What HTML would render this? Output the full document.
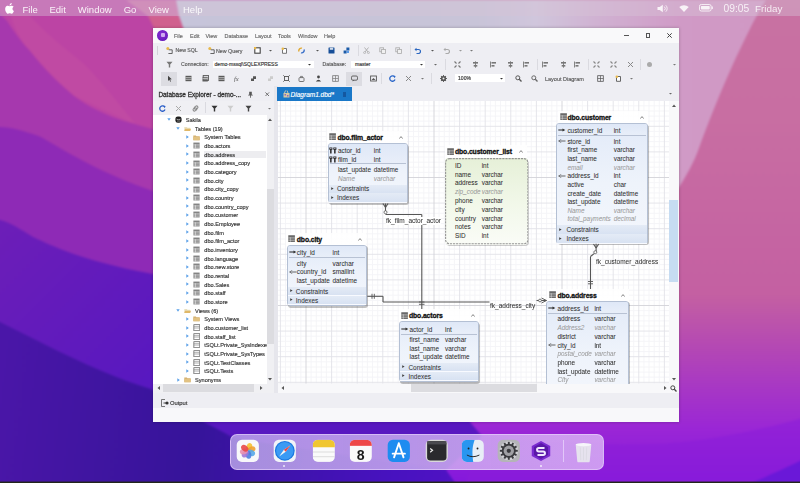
<!DOCTYPE html>
<html><head><meta charset="utf-8"><style>
html,body{margin:0;padding:0;width:800px;height:483px;overflow:hidden;background:#6020b0}
body{position:relative;font-family:"Liberation Sans", sans-serif}
</style></head><body>
<div style="position:absolute;left:0;top:0;width:800px;height:483px;filter:blur(0.42px)"><svg width="820" height="503" viewBox="-10 -10 820 503" style="position:absolute;left:-10px;top:-10px;filter:blur(1px)">
<defs>
<linearGradient id="gR" x1="0" y1="0" x2="0" y2="483" gradientUnits="userSpaceOnUse">
 <stop offset="0" stop-color="#c872a2"/>
 <stop offset="0.25" stop-color="#c86ea2"/>
 <stop offset="0.61" stop-color="#c460a2"/>
 <stop offset="0.72" stop-color="#b448b4"/>
 <stop offset="0.89" stop-color="#9a26d6"/>
 <stop offset="1" stop-color="#8418dc"/>
</linearGradient>
<linearGradient id="gTop" x1="170" y1="0" x2="780" y2="0" gradientUnits="userSpaceOnUse">
 <stop offset="0" stop-color="#c6c4da"/>
 <stop offset="0.5" stop-color="#c8c4d8"/>
 <stop offset="0.6" stop-color="#d0c6dc"/>
 <stop offset="0.7" stop-color="#d0b2d2"/>
 <stop offset="0.84" stop-color="#d09ac6"/>
 <stop offset="1" stop-color="#d098c4"/>
</linearGradient>
<linearGradient id="gP4" x1="0" y1="230" x2="150" y2="380" gradientUnits="userSpaceOnUse">
 <stop offset="0" stop-color="#6c1eb8"/>
 <stop offset="1" stop-color="#5818c0"/>
</linearGradient>
<linearGradient id="gBot" x1="0" y1="380" x2="800" y2="483" gradientUnits="userSpaceOnUse">
 <stop offset="0" stop-color="#4a16a8"/>
 <stop offset="0.25" stop-color="#36149a"/>
 <stop offset="0.5" stop-color="#4812c0"/>
 <stop offset="1" stop-color="#7a18d8"/>
</linearGradient>
</defs>
<rect x="-10" y="-10" width="820" height="503" fill="url(#gR)"/>
<!-- P1 pink top-left -->
<path d="M-10 -10 H400 V493 H-10 Z" fill="#bc44a4"/>
<!-- P2 -->
<path d="M28 14 C42 30 62 46 84 64 C100 80 116 100 136 125 L74 96 C60 84 45 69 30 51 C22 43 15 30 10 14 Z" fill="#c652a2" opacity="0.45"/>
<path d="M-10 4 L7 21 C15 33 22 43 30 51 C37 60 45 69 52 76 C60 84 67 90 74 96 C82 102 90 107 99 111 C107 115 115 118 124 121 C132 123 141 126 153 129 L400 200 V493 H-10 Z" fill="#a638ae"/>
<!-- P3 -->
<path d="M-10 126 L0 127 C10 127 25 131 41 137 C70 154 103 174 153 191 L400 260 V493 H-10 Z" fill="#8e2ab6"/>
<!-- P4 -->
<path d="M-10 218 L0 220 C10 222 20 229 33 237 C66 253 103 265 153 274 L480 380 L470 422 L482 436 L446 470 L462 493 H-10 Z" fill="url(#gP4)"/>
<!-- P5 dark -->
<path d="M-10 317 L0 322 C14 329 28 336 42 343 C84 364 120 380 151 389 C170 400 190 412 204 422 C215 428 225 433 232 437 C300 450 400 462 446 470 L462 493 L-10 493 Z" fill="url(#gBot)"/>
<!-- red sliver + light top region -->
<path d="M126 0 L176 0 L179 16 L148 16 Z" fill="#cc6aa6"/><path d="M148 16 L179 16 L184 30 L155 30 Z" fill="#d0608e"/>
<path d="M176 0 L766 0 C748 28 718 95 699 148 C694 162 687 175 676 192 L190 192 L184 30 L179 16 Z" fill="url(#gTop)"/>
<path d="M482 436 C560 445 650 448 700 440 C740 434 780 425 810 416 L810 493 L462 493 Z" fill="#8a1ed8" opacity="0.55"/>
<path d="M752 483 C770 475 785 468 800 461 L810 456 L810 493 L752 493 Z" fill="#6a18d8"/>

</svg><div style="position:absolute;left:0;top:481px;width:800px;height:2px;background:linear-gradient(rgba(34,38,28,0.45) 50%,#22261c 50%)"></div><div style="position:absolute;left:0;top:0;width:800px;height:16px;background:rgba(215,195,215,0.42)"></div><svg style="position:absolute;left:5px;top:3px" width="9" height="11" viewBox="0 0 17 20"><path fill="#fff" d="M14.1 10.6c0-2.6 2.1-3.8 2.2-3.9-1.2-1.8-3.1-2-3.7-2-1.6-.2-3.1.9-3.9.9-.8 0-2-.9-3.3-.9-1.7 0-3.3 1-4.2 2.5-1.8 3.1-.5 7.7 1.3 10.2.9 1.2 1.9 2.6 3.2 2.6 1.3-.1 1.8-.8 3.3-.8 1.6 0 2 .8 3.3.8 1.4 0 2.3-1.3 3.1-2.5 1-1.4 1.4-2.8 1.4-2.9-.1 0-2.7-1-2.7-4zM11.6 3c.7-.9 1.2-2 1-3.2-1 0-2.3.7-3 1.6-.7.8-1.2 2-1.1 3.1 1.2.1 2.3-.6 3.1-1.5z"/></svg><div style="position:absolute;left:22.5px;top:4.6px;font-size:9.5px;line-height:1;color:rgba(255,255,255,0.9);white-space:nowrap;">File</div><div style="position:absolute;left:49.5px;top:4.6px;font-size:9.5px;line-height:1;color:rgba(255,255,255,0.9);white-space:nowrap;">Edit</div><div style="position:absolute;left:77.8px;top:4.6px;font-size:9.5px;line-height:1;color:rgba(255,255,255,0.9);white-space:nowrap;">Window</div><div style="position:absolute;left:123.7px;top:4.6px;font-size:9.5px;line-height:1;color:rgba(255,255,255,0.9);white-space:nowrap;">Go</div><div style="position:absolute;left:148.5px;top:4.6px;font-size:9.5px;line-height:1;color:rgba(255,255,255,0.9);white-space:nowrap;">View</div><div style="position:absolute;left:183px;top:4.6px;font-size:9.5px;line-height:1;color:rgba(255,255,255,0.9);white-space:nowrap;">Help</div><svg style="position:absolute;left:657px;top:3.5px;opacity:0.85" width="11" height="9" viewBox="0 0 11 9"><path d="M0.5 3h2.2L5.8 0.8v7.4L2.7 6H0.5z" fill="#fff"/><path d="M7.3 2.6a2.6 2.6 0 0 1 0 3.8M8.8 1.3a4.4 4.4 0 0 1 0 6.4" fill="none" stroke="#fff" stroke-width="0.9"/></svg><svg style="position:absolute;left:678.5px;top:3.5px;opacity:0.85" width="10" height="8.5" viewBox="0 0 11 9"><path d="M5.5 8.5L0.3 3.2A7.5 7.5 0 0 1 10.7 3.2Z" fill="#fff"/></svg><svg style="position:absolute;left:698.5px;top:4.2px;opacity:0.85" width="14" height="7.5" viewBox="0 0 15 8"><rect x="0.5" y="0.5" width="12.5" height="7" rx="2" fill="none" stroke="#fff" stroke-width="1"/><rect x="2" y="2" width="9.5" height="4" rx="0.8" fill="#fff"/><rect x="13.6" y="2.6" width="1.2" height="2.8" fill="#fff"/></svg><div style="position:absolute;left:723.5px;top:3.9px;font-size:10.3px;line-height:1;color:rgba(255,255,255,0.82);white-space:nowrap;">09:05</div><div style="position:absolute;left:755px;top:3.9px;font-size:9.9px;line-height:1;color:rgba(255,255,255,0.82);white-space:nowrap;">Friday</div><div style="position:absolute;left:153px;top:28px;width:526px;height:394px;background:#eeeef3;box-shadow:0 0 3px rgba(0,0,0,0.25)"></div><div style="position:absolute;left:153px;top:28px;width:526px;height:14.5px;background:#f9f9fa"></div><div style="position:absolute;left:157.3px;top:29.8px;width:11px;height:11px;border-radius:50%;background:radial-gradient(circle at 45% 40%,#8a30d8,#5a10b0)"></div><div style="position:absolute;left:160.6px;top:32.6px;width:4.6px;height:4.8px;border-radius:1px;background:#d8b8f4;opacity:0.9"></div><div style="position:absolute;left:174px;top:32.61px;font-size:5.5px;line-height:1.15;color:#6a6a6a;white-space:nowrap;-webkit-text-stroke:0.15px #6a6a6a;">File</div><div style="position:absolute;left:190px;top:32.61px;font-size:5.5px;line-height:1.15;color:#6a6a6a;white-space:nowrap;-webkit-text-stroke:0.15px #6a6a6a;">Edit</div><div style="position:absolute;left:205.5px;top:32.61px;font-size:5.5px;line-height:1.15;color:#6a6a6a;white-space:nowrap;-webkit-text-stroke:0.15px #6a6a6a;">View</div><div style="position:absolute;left:224.5px;top:32.61px;font-size:5.5px;line-height:1.15;color:#6a6a6a;white-space:nowrap;-webkit-text-stroke:0.15px #6a6a6a;">Database</div><div style="position:absolute;left:255px;top:32.61px;font-size:5.5px;line-height:1.15;color:#6a6a6a;white-space:nowrap;-webkit-text-stroke:0.15px #6a6a6a;">Layout</div><div style="position:absolute;left:278px;top:32.61px;font-size:5.5px;line-height:1.15;color:#6a6a6a;white-space:nowrap;-webkit-text-stroke:0.15px #6a6a6a;">Tools</div><div style="position:absolute;left:298px;top:32.61px;font-size:5.5px;line-height:1.15;color:#6a6a6a;white-space:nowrap;-webkit-text-stroke:0.15px #6a6a6a;">Window</div><div style="position:absolute;left:324px;top:32.61px;font-size:5.5px;line-height:1.15;color:#6a6a6a;white-space:nowrap;-webkit-text-stroke:0.15px #6a6a6a;">Help</div><div style="position:absolute;left:624px;top:35.3px;width:5px;height:0.8px;background:#555"></div><div style="position:absolute;left:645.5px;top:33px;width:4.5px;height:4.5px;border:1px solid #555;box-sizing:border-box"></div><svg style="position:absolute;left:666.5px;top:32.5px" width="5" height="5" viewBox="0 0 5 5"><path d="M0.3 0.3L4.7 4.7M4.7 0.3L0.3 4.7" stroke="#444" stroke-width="1"/></svg><div style="position:absolute;left:156.8px;top:46px;width:0.8px;height:9px;background:#d2d2d8"></div><svg style="position:absolute;left:166.00px;top:47.00px" width="7" height="7" viewBox="0 0 7 7"><circle cx="1.8" cy="1.6" r="1.5" fill="#e8b84a"/><path d="M2.8 2.8h3.4v3.7H2.4" fill="none" stroke="#555" stroke-width="0.9"/></svg><div style="position:absolute;left:175.5px;top:48.18px;font-size:5.2px;line-height:1.15;color:#5a5a5a;white-space:nowrap;-webkit-text-stroke:0.15px #5a5a5a;">New SQL</div><svg style="position:absolute;left:207.50px;top:47.00px" width="7" height="7" viewBox="0 0 7 7"><circle cx="1.8" cy="1.6" r="1.5" fill="#e8b84a"/><path d="M2.8 2.8h3.4v3.7H2.4" fill="none" stroke="#555" stroke-width="0.9"/></svg><div style="position:absolute;left:216px;top:48.13px;font-size:5.3px;line-height:1.15;color:#5a5a5a;white-space:nowrap;-webkit-text-stroke:0.15px #5a5a5a;">New Query</div><svg style="position:absolute;left:253.50px;top:47.00px" width="7" height="7" viewBox="0 0 7 7"><rect x="0.8" y="0.8" width="5.4" height="5.4" fill="#fff" stroke="#444" stroke-width="1.1"/><rect x="0" y="0" width="2.2" height="2.2" fill="#e8b84a"/></svg><svg style="position:absolute;left:267.00px;top:47.00px" width="7" height="7" viewBox="0 0 7 7"><path d="M2 3L5 3L3.5 4.6Z" fill="#555"/></svg><svg style="position:absolute;left:281.00px;top:47.00px" width="7" height="7" viewBox="0 0 7 7"><path d="M1.5 1.5H5.5V6.3H1.5Z" fill="#fff" stroke="#666" stroke-width="0.9"/><circle cx="1.8" cy="1.8" r="1.3" fill="#e8b84a"/></svg><svg style="position:absolute;left:298.00px;top:47.00px" width="7" height="7" viewBox="0 0 7 7"><path d="M1 4.5A2.5 2.5 0 0 1 4 1.2" fill="none" stroke="#e0a830" stroke-width="1.4"/><path d="M6 2.5A2.5 2.5 0 0 1 3 5.8" fill="none" stroke="#3a70c8" stroke-width="1.4"/></svg><svg style="position:absolute;left:314.00px;top:47.00px" width="7" height="7" viewBox="0 0 7 7"><path d="M2 3L5 3L3.5 4.6Z" fill="#555"/></svg><svg style="position:absolute;left:328.00px;top:47.00px" width="7" height="7" viewBox="0 0 7 7"><rect x="0.5" y="0.5" width="6" height="6" rx="0.5" fill="#164e98"/><rect x="1.8" y="0.8" width="3.4" height="2" fill="#fff" opacity="0.8"/></svg><svg style="position:absolute;left:343.00px;top:47.00px" width="7" height="7" viewBox="0 0 7 7"><rect x="3.4" y="0.5" width="3" height="3" fill="#1a5aa8"/><rect x="0.6" y="3.5" width="3" height="3" fill="#1a5aa8"/><rect x="3.8" y="3.8" width="2.2" height="2.2" fill="#5a9ae8"/></svg><div style="position:absolute;left:357.5px;top:45px;width:0.7px;height:11px;background:#dadae0"></div><svg style="position:absolute;left:363.00px;top:47.00px" width="7" height="7" viewBox="0 0 7 7"><path d="M1.5 0.5L5 5M5.5 0.5L2 5" stroke="#aaa" stroke-width="0.9"/><circle cx="1.6" cy="5.6" r="1" fill="none" stroke="#aaa" stroke-width="0.7"/><circle cx="5.4" cy="5.6" r="1" fill="none" stroke="#aaa" stroke-width="0.7"/></svg><svg style="position:absolute;left:379.00px;top:47.00px" width="7" height="7" viewBox="0 0 7 7"><rect x="0.8" y="0.8" width="3.8" height="4" fill="none" stroke="#aaa" stroke-width="0.8"/><rect x="2.6" y="2.4" width="3.8" height="4" fill="#f0f0f0" stroke="#aaa" stroke-width="0.8"/></svg><svg style="position:absolute;left:395.00px;top:47.00px" width="7" height="7" viewBox="0 0 7 7"><rect x="0.8" y="0.8" width="3.8" height="4" fill="none" stroke="#aaa" stroke-width="0.8"/><rect x="2.6" y="2.4" width="3.8" height="4" fill="#f0f0f0" stroke="#aaa" stroke-width="0.8"/></svg><div style="position:absolute;left:410px;top:45px;width:0.7px;height:11px;background:#dadae0"></div><svg style="position:absolute;left:414.00px;top:47.00px" width="7" height="7" viewBox="0 0 7 7"><path d="M1.5 2.5h3a2 2 0 0 1 0 4h-2" fill="none" stroke="#2a66c0" stroke-width="1.2"/><path d="M0.5 2.5L2.5 0.8V4.2Z" fill="#2a66c0"/></svg><svg style="position:absolute;left:428.50px;top:47.00px" width="7" height="7" viewBox="0 0 7 7"><path d="M2 3L5 3L3.5 4.6Z" fill="#555"/></svg><svg style="position:absolute;left:442.50px;top:47.00px" width="7" height="7" viewBox="0 0 7 7"><path d="M1.5 2.5h3a2 2 0 0 1 0 4h-2" fill="none" stroke="#aaa" stroke-width="1.2"/><path d="M0.5 2.5L2.5 0.8V4.2Z" fill="#aaa"/></svg><svg style="position:absolute;left:456.50px;top:47.00px" width="7" height="7" viewBox="0 0 7 7"><path d="M2 3L5 3L3.5 4.6Z" fill="#999"/></svg><svg style="position:absolute;left:467.50px;top:47.00px" width="7" height="7" viewBox="0 0 7 7"><path d="M2 3L5 3L3.5 4.6Z" fill="#777"/></svg><svg style="position:absolute;left:166.00px;top:60.80px" width="7" height="7" viewBox="0 0 7 7"><path d="M0.5 0.8H6.5L4.2 3.5V6.5H2.8V3.5Z" fill="#777"/></svg><div style="position:absolute;left:181px;top:61.98px;font-size:5.2px;line-height:1.15;color:#5a5a5a;white-space:nowrap;-webkit-text-stroke:0.15px #5a5a5a;">Connection:</div><div style="position:absolute;left:212.5px;top:60.5px;width:101.5px;height:7.8px;background:#fff"></div><div style="position:absolute;left:214.5px;top:62.04px;font-size:5.1px;line-height:1.15;color:#333;white-space:nowrap;-webkit-text-stroke:0.15px #333;">demo-mssql\SQLEXPRESS</div><svg style="position:absolute;left:306.00px;top:60.80px" width="7" height="7" viewBox="0 0 7 7"><path d="M2 3L5 3L3.5 4.6Z" fill="#333"/></svg><div style="position:absolute;left:322.5px;top:61.98px;font-size:5.2px;line-height:1.15;color:#5a5a5a;white-space:nowrap;-webkit-text-stroke:0.15px #5a5a5a;">Database:</div><div style="position:absolute;left:351px;top:60.5px;width:74px;height:7.8px;background:#fff"></div><div style="position:absolute;left:355px;top:62.04px;font-size:5.1px;line-height:1.15;color:#333;white-space:nowrap;-webkit-text-stroke:0.15px #333;">master</div><svg style="position:absolute;left:418.00px;top:60.80px" width="7" height="7" viewBox="0 0 7 7"><path d="M2 3L5 3L3.5 4.6Z" fill="#333"/></svg><svg style="position:absolute;left:432.00px;top:60.80px" width="7" height="7" viewBox="0 0 7 7"><path d="M2 3L5 3L3.5 4.6Z" fill="#666"/></svg><div style="position:absolute;left:444.5px;top:59px;width:0.7px;height:11px;background:#dadae0"></div><svg style="position:absolute;left:453.50px;top:60.80px" width="7" height="7" viewBox="0 0 7 7"><path d="M0.5 0.5L2.5 2.5M6.5 0.5L4.5 2.5M0.5 6.5L2.5 4.5M6.5 6.5L4.5 4.5" stroke="#777" stroke-width="1.1"/></svg><svg style="position:absolute;left:471.50px;top:60.80px" width="7" height="7" viewBox="0 0 7 7"><path d="M3.5 0.3V6.7" stroke="#777" stroke-width="0.9"/><rect x="1" y="1" width="5" height="1.6" fill="#777"/><rect x="1.7" y="4" width="3.6" height="1.6" fill="#777"/></svg><svg style="position:absolute;left:490.20px;top:60.80px" width="7" height="7" viewBox="0 0 7 7"><path d="M0.5 0.5V6.5" stroke="#777" stroke-width="0.9"/><rect x="1.5" y="1" width="4.5" height="1.6" fill="#777"/><rect x="1.5" y="4" width="3" height="1.6" fill="#777"/></svg><svg style="position:absolute;left:506.50px;top:60.80px" width="7" height="7" viewBox="0 0 7 7"><path d="M3.5 0.3V6.7" stroke="#777" stroke-width="0.9"/><rect x="1" y="1" width="5" height="1.6" fill="#777"/><rect x="1.7" y="4" width="3.6" height="1.6" fill="#777"/></svg><svg style="position:absolute;left:523.00px;top:60.80px" width="7" height="7" viewBox="0 0 7 7"><path d="M0.5 0.5V6.5" stroke="#777" stroke-width="0.9"/><rect x="1.5" y="1" width="4.5" height="1.6" fill="#777"/><rect x="1.5" y="4" width="3" height="1.6" fill="#777"/></svg><div style="position:absolute;left:537px;top:59px;width:0.7px;height:11px;background:#dadae0"></div><svg style="position:absolute;left:541.50px;top:60.80px" width="7" height="7" viewBox="0 0 7 7"><path d="M0.5 0.5V6.5" stroke="#777" stroke-width="0.9"/><rect x="1.5" y="1" width="4.5" height="1.6" fill="#777"/><rect x="1.5" y="4" width="3" height="1.6" fill="#777"/></svg><svg style="position:absolute;left:559.50px;top:60.80px" width="7" height="7" viewBox="0 0 7 7"><path d="M3.5 0.3V6.7" stroke="#777" stroke-width="0.9"/><rect x="1" y="1" width="5" height="1.6" fill="#777"/><rect x="1.7" y="4" width="3.6" height="1.6" fill="#777"/></svg><svg style="position:absolute;left:574.10px;top:60.80px" width="7" height="7" viewBox="0 0 7 7"><path d="M0.5 0.5V6.5" stroke="#777" stroke-width="0.9"/><rect x="1.5" y="1" width="4.5" height="1.6" fill="#777"/><rect x="1.5" y="4" width="3" height="1.6" fill="#777"/></svg><div style="position:absolute;left:587.7px;top:59px;width:0.7px;height:11px;background:#dadae0"></div><svg style="position:absolute;left:593.20px;top:60.80px" width="7" height="7" viewBox="0 0 7 7"><path d="M0.5 0.5L2.5 2.5M6.5 0.5L4.5 2.5M0.5 6.5L2.5 4.5M6.5 6.5L4.5 4.5" stroke="#888" stroke-width="1.1"/></svg><svg style="position:absolute;left:610.10px;top:60.80px" width="7" height="7" viewBox="0 0 7 7"><path d="M0.5 0.5L2.5 2.5M6.5 0.5L4.5 2.5M0.5 6.5L2.5 4.5M6.5 6.5L4.5 4.5" stroke="#888" stroke-width="1.1"/></svg><svg style="position:absolute;left:627.00px;top:60.80px" width="7" height="7" viewBox="0 0 7 7"><path d="M1 1L6 6M6 1L1 6" stroke="#888" stroke-width="1"/></svg><div style="position:absolute;left:639.5px;top:59px;width:0.7px;height:11px;background:#dadae0"></div><svg style="position:absolute;left:646.10px;top:60.80px" width="7" height="7" viewBox="0 0 7 7"><circle cx="3.5" cy="3.5" r="2.5" fill="#aaa"/></svg><svg style="position:absolute;left:670.90px;top:60.80px" width="7" height="7" viewBox="0 0 7 7"><path d="M2 3L5 3L3.5 4.6Z" fill="#777"/></svg><div style="position:absolute;left:161px;top:72px;width:16.4px;height:13.6px;background:#dcdce2"></div><svg style="position:absolute;left:166.00px;top:75.00px" width="7" height="7" viewBox="0 0 7 7"><path d="M2 0.8L2 6L3.3 4.8L4.3 6.8L5 6.4L4.1 4.5L5.8 4.3Z" fill="#444"/></svg><svg style="position:absolute;left:185.10px;top:75.00px" width="7" height="7" viewBox="0 0 7 7"><rect x="0.5" y="0.8" width="6" height="5.4" fill="#5a5a5a"/><path d="M0.5 2.6H6.5M0.5 4.3H6.5" stroke="#eee" stroke-width="0.6"/></svg><svg style="position:absolute;left:201.50px;top:75.00px" width="7" height="7" viewBox="0 0 7 7"><rect x="1.2" y="0.5" width="5.3" height="5" fill="none" stroke="#5a5a5a" stroke-width="0.9"/><rect x="0.5" y="1.8" width="5.3" height="4.8" fill="#5a5a5a" opacity="0.8"/><path d="M0.5 3.6H5.8" stroke="#eee" stroke-width="0.6"/></svg><svg style="position:absolute;left:217.50px;top:75.00px" width="7" height="7" viewBox="0 0 7 7"><rect x="0.5" y="0.8" width="6" height="5.4" fill="#5a5a5a"/><path d="M0.5 2.6H6.5M0.5 4.3H6.5" stroke="#eee" stroke-width="0.6"/></svg><svg style="position:absolute;left:233.90px;top:75.00px" width="7" height="7" viewBox="0 0 7 7"><text x="0" y="6" font-size="6.5" font-style="italic" font-family="Liberation Serif" fill="#555">fx</text></svg><svg style="position:absolute;left:250.20px;top:75.00px" width="7" height="7" viewBox="0 0 7 7"><path d="M1 3.5H3V1.2H6V4H4V6H1Z" fill="#555"/></svg><svg style="position:absolute;left:266.50px;top:75.00px" width="7" height="7" viewBox="0 0 7 7"><path d="M1 3.5H3V1.2H6V4H4V6H1Z" fill="#ccc"/></svg><svg style="position:absolute;left:282.50px;top:75.00px" width="7" height="7" viewBox="0 0 7 7"><rect x="1.5" y="1.5" width="4" height="4" fill="none" stroke="#555" stroke-width="0.9"/><path d="M0.3 0.3L1.8 1.8M6.7 0.3L5.2 1.8M0.3 6.7L1.8 5.2M6.7 6.7L5.2 5.2" stroke="#555" stroke-width="0.9"/></svg><svg style="position:absolute;left:298.00px;top:75.00px" width="7" height="7" viewBox="0 0 7 7"><rect x="1" y="2.6" width="5" height="3.9" rx="0.8" fill="none" stroke="#666" stroke-width="0.9"/><path d="M2.5 2.6V1.4H4.5V2.6" fill="none" stroke="#666" stroke-width="0.8"/></svg><svg style="position:absolute;left:315.20px;top:75.00px" width="7" height="7" viewBox="0 0 7 7"><circle cx="3.5" cy="2" r="1.4" fill="#444"/><path d="M0.8 6.5Q3.5 2.8 6.2 6.5Z" fill="#444"/></svg><svg style="position:absolute;left:331.50px;top:75.00px" width="7" height="7" viewBox="0 0 7 7"><rect x="0.7" y="0.7" width="5.6" height="5.6" fill="none" stroke="#777" stroke-width="0.8"/><path d="M3.5 0.7V6.3M0.7 3.5H6.3" stroke="#777" stroke-width="0.7"/></svg><div style="position:absolute;left:346px;top:72px;width:16px;height:13.6px;background:#dcdce2"></div><svg style="position:absolute;left:350.50px;top:75.00px" width="7" height="7" viewBox="0 0 7 7"><rect x="0.5" y="1" width="6" height="4.2" rx="1.3" fill="none" stroke="#555" stroke-width="0.9"/><path d="M2 5L1.6 6.6L3.4 5" fill="#555"/></svg><svg style="position:absolute;left:370.20px;top:75.00px" width="7" height="7" viewBox="0 0 7 7"><rect x="0.6" y="1" width="5.8" height="5" fill="none" stroke="#555" stroke-width="0.9"/><path d="M1.5 5L3.5 3L5.5 5Z" fill="#555"/></svg><div style="position:absolute;left:381px;top:73px;width:0.7px;height:11px;background:#dadae0"></div><svg style="position:absolute;left:389.00px;top:75.00px" width="7" height="7" viewBox="0 0 7 7"><path d="M5.8 2.2A2.7 2.7 0 1 0 6 4.5" fill="none" stroke="#2a66c8" stroke-width="1.3"/><path d="M4.2 0.5L6.5 1L5.8 3.2Z" fill="#2a66c8"/></svg><svg style="position:absolute;left:405.20px;top:75.00px" width="7" height="7" viewBox="0 0 7 7"><path d="M1 1L6 6M6 1L1 6" stroke="#888" stroke-width="1"/></svg><svg style="position:absolute;left:418.50px;top:75.00px" width="7" height="7" viewBox="0 0 7 7"><path d="M2 3L5 3L3.5 4.6Z" fill="#777"/></svg><div style="position:absolute;left:431px;top:73px;width:0.7px;height:11px;background:#dadae0"></div><svg style="position:absolute;left:440.20px;top:75.00px" width="7" height="7" viewBox="0 0 7 7"><circle cx="3.5" cy="3.5" r="2.6" fill="#555"/><circle cx="3.5" cy="3.5" r="1" fill="#eee"/><rect x="3" y="0.1" width="1" height="1.6" fill="#555" transform="rotate(0 3.5 3.5)"/><rect x="3" y="0.1" width="1" height="1.6" fill="#555" transform="rotate(45 3.5 3.5)"/><rect x="3" y="0.1" width="1" height="1.6" fill="#555" transform="rotate(90 3.5 3.5)"/><rect x="3" y="0.1" width="1" height="1.6" fill="#555" transform="rotate(135 3.5 3.5)"/><rect x="3" y="0.1" width="1" height="1.6" fill="#555" transform="rotate(180 3.5 3.5)"/><rect x="3" y="0.1" width="1" height="1.6" fill="#555" transform="rotate(225 3.5 3.5)"/><rect x="3" y="0.1" width="1" height="1.6" fill="#555" transform="rotate(270 3.5 3.5)"/><rect x="3" y="0.1" width="1" height="1.6" fill="#555" transform="rotate(315 3.5 3.5)"/></svg><div style="position:absolute;left:455px;top:74.3px;width:50px;height:8px;background:#fff"></div><div style="position:absolute;left:458px;top:76.24px;font-size:5.1px;line-height:1.15;color:#333;white-space:nowrap;-webkit-text-stroke:0.15px #333;">100%</div><svg style="position:absolute;left:497.50px;top:75.00px" width="7" height="7" viewBox="0 0 7 7"><path d="M2 3L5 3L3.5 4.6Z" fill="#333"/></svg><svg style="position:absolute;left:514.50px;top:75.00px" width="7" height="7" viewBox="0 0 7 7"><circle cx="2.8" cy="2.8" r="2" fill="none" stroke="#555" stroke-width="1"/><path d="M4.3 4.3L6.5 6.5" stroke="#555" stroke-width="1.3"/></svg><svg style="position:absolute;left:530.50px;top:75.00px" width="7" height="7" viewBox="0 0 7 7"><circle cx="2.8" cy="2.8" r="2" fill="none" stroke="#666" stroke-width="1"/><path d="M4.3 4.3L6.5 6.5" stroke="#666" stroke-width="1.3"/></svg><div style="position:absolute;left:545px;top:76.01px;font-size:5.5px;line-height:1.15;color:#5a5a5a;white-space:nowrap;-webkit-text-stroke:0.15px #5a5a5a;">Layout Diagram</div><svg style="position:absolute;left:596.50px;top:75.00px" width="7" height="7" viewBox="0 0 7 7"><rect x="0.7" y="0.7" width="5.6" height="5.6" fill="none" stroke="#555" stroke-width="0.8"/><path d="M3.5 0.7V6.3M0.7 3.5H6.3" stroke="#555" stroke-width="0.7"/></svg><svg style="position:absolute;left:615.00px;top:75.00px" width="7" height="7" viewBox="0 0 7 7"><path d="M1.5 1.5H5.5V6.3H1.5Z" fill="#fff" stroke="#555" stroke-width="0.9"/><circle cx="1.8" cy="1.8" r="1.3" fill="#e8b84a"/></svg><svg style="position:absolute;left:628.10px;top:75.00px" width="7" height="7" viewBox="0 0 7 7"><path d="M2 3L5 3L3.5 4.6Z" fill="#777"/></svg><div style="position:absolute;left:153px;top:86px;width:121px;height:15px;background:#eeeef3"></div><div style="position:absolute;left:158.4px;top:90.96px;font-size:6.45px;line-height:1.15;color:#333;white-space:nowrap;-webkit-text-stroke:0.15px #333;-webkit-text-stroke:0.3px #333">Database Explorer - demo-...</div><svg style="position:absolute;left:246.50px;top:90.50px" width="7" height="7" viewBox="0 0 7 7"><path d="M2.2 0.8H4.8V3.8H5.8V4.6H3.9V6.8H3.1V4.6H1.2V3.8H2.2Z" fill="#555"/></svg><svg style="position:absolute;left:265px;top:91.7px" width="4.5" height="4.5" viewBox="0 0 5 5"><path d="M0.5 0.5L4.5 4.5M4.5 0.5L0.5 4.5" stroke="#555" stroke-width="0.9"/></svg><div style="position:absolute;left:153px;top:101px;width:121px;height:14px;background:#f0f0f4"></div><svg style="position:absolute;left:158.50px;top:104.50px" width="7" height="7" viewBox="0 0 7 7"><path d="M5.8 2.2A2.7 2.7 0 1 0 6 4.5" fill="none" stroke="#2a5ec8" stroke-width="1.3"/><path d="M4.2 0.5L6.5 1L5.8 3.2Z" fill="#2a5ec8"/></svg><svg style="position:absolute;left:175.30px;top:104.50px" width="7" height="7" viewBox="0 0 7 7"><path d="M1 1L6 6M6 1L1 6" stroke="#aaa" stroke-width="1"/></svg><svg style="position:absolute;left:192.00px;top:104.50px" width="7" height="7" viewBox="0 0 7 7"><rect x="0.6" y="2.6" width="3.8" height="2.6" rx="1.3" fill="none" stroke="#888" stroke-width="1" transform="rotate(-35 3.5 3.5)"/><rect x="2.6" y="1.8" width="3.8" height="2.6" rx="1.3" fill="none" stroke="#888" stroke-width="1" transform="rotate(-35 3.5 3.5)"/></svg><div style="position:absolute;left:205px;top:102px;width:0.7px;height:11px;background:#dadae0"></div><svg style="position:absolute;left:210.50px;top:104.50px" width="7" height="7" viewBox="0 0 7 7"><path d="M0.5 0.8H6.5L4.2 3.5V6.5H2.8V3.5Z" fill="#333"/></svg><svg style="position:absolute;left:227.00px;top:104.50px" width="7" height="7" viewBox="0 0 7 7"><path d="M0.5 0.8H6.5L4.2 3.5V6.5H2.8V3.5Z" fill="#ccc"/></svg><svg style="position:absolute;left:244.50px;top:104.50px" width="7" height="7" viewBox="0 0 7 7"><path d="M0.5 0.8H6.5L4.2 3.5V6.5H2.8V3.5Z" fill="#444"/></svg><svg style="position:absolute;left:265.50px;top:104.50px" width="7" height="7" viewBox="0 0 7 7"><path d="M2 3L5 3L3.5 4.6Z" fill="#777"/></svg><div style="position:absolute;left:153px;top:115px;width:113.5px;height:268.5px;background:#fff"></div><div style="position:absolute;left:266.5px;top:115px;width:7.5px;height:268.5px;background:#f0f0f3"></div><div style="position:absolute;left:266.5px;top:189px;width:7.5px;height:154.8px;background:#dcdce0"></div><svg style="position:absolute;left:268.3px;top:118px" width="4" height="3" viewBox="0 0 4 3"><path d="M0 3L2 0.5L4 3Z" fill="#555"/></svg><svg style="position:absolute;left:268.3px;top:377.5px" width="4" height="3" viewBox="0 0 4 3"><path d="M0 0L2 2.5L4 0Z" fill="#555"/></svg><div style="position:absolute;left:153px;top:383.6px;width:121px;height:9px;background:#f0f0f3"></div><div style="position:absolute;left:162.5px;top:384.3px;width:91.5px;height:7.5px;background:#dcdce0"></div><svg style="position:absolute;left:156.5px;top:386px" width="3" height="4" viewBox="0 0 3 4"><path d="M3 0L0.5 2L3 4Z" fill="#555"/></svg><svg style="position:absolute;left:259.5px;top:386px" width="3" height="4" viewBox="0 0 3 4"><path d="M0 0L2.5 2L0 4Z" fill="#555"/></svg><div style="position:absolute;left:203.5px;top:150.552px;width:62.5px;height:7.6px;background:#ededf0"></div><div style="position:absolute;left:153px;top:115px;width:113.5px;height:268.5px;overflow:hidden"><svg style="position:absolute;left:13.80px;top:3.20px" width="4" height="3" viewBox="0 0 4 3"><path d="M0.3 0.3H3.7L2 2.7Z" fill="#5aa0e8"/></svg><svg style="position:absolute;left:21.70px;top:1.20px" width="7" height="7" viewBox="0 0 7 7"><rect x="0.4" y="0.4" width="6.2" height="6.4" rx="2.4" fill="#1e1e1e"/><path d="M1.6 3.2Q3.5 4.2 5.4 3.2" stroke="#ddd" stroke-width="0.7" fill="none"/><rect x="2" y="4.4" width="3" height="1.3" fill="#666"/></svg><div style="position:absolute;left:32.70000000000001px;top:2.15px;font-size:5.6px;line-height:1.15;color:#333;white-space:nowrap;-webkit-text-stroke:0.15px #333;">Sakila</div><svg style="position:absolute;left:23.10px;top:11.86px" width="4" height="3" viewBox="0 0 4 3"><path d="M0.3 0.3H3.7L2 2.7Z" fill="#5aa0e8"/></svg><svg style="position:absolute;left:31.00px;top:9.86px" width="7" height="7" viewBox="0 0 7 7"><path d="M0.3 2H2.8L3.5 2.8H6.2V6H0.3Z" fill="#e8e0c0"/><path d="M1 3.8H7L6.2 6H0.3Z" fill="#e0b868"/></svg><div style="position:absolute;left:42.00000000000002px;top:10.81px;font-size:5.6px;line-height:1.15;color:#333;white-space:nowrap;-webkit-text-stroke:0.15px #333;">Tables (19)</div><svg style="position:absolute;left:32.90px;top:20.03px" width="3" height="4" viewBox="0 0 3 4"><path d="M0.3 0.2V3.8L2.8 2Z" fill="#5aa0e8"/></svg><svg style="position:absolute;left:40.30px;top:18.53px" width="7" height="7" viewBox="0 0 7 7"><path d="M0.3 1.5H2.8L3.5 2.3H6.7V6.2H0.3Z" fill="#d4b070"/><rect x="0.3" y="2.8" width="6.4" height="3.4" fill="#e2c282"/></svg><div style="position:absolute;left:51.300000000000004px;top:19.48px;font-size:5.6px;line-height:1.15;color:#333;white-space:nowrap;-webkit-text-stroke:0.15px #333;">System Tables</div><svg style="position:absolute;left:32.90px;top:28.69px" width="3" height="4" viewBox="0 0 3 4"><path d="M0.3 0.2V3.8L2.8 2Z" fill="#5aa0e8"/></svg><svg style="position:absolute;left:40.30px;top:27.19px" width="7" height="7" viewBox="0 0 7 7"><rect x="0.4" y="0.6" width="6.2" height="5.8" fill="#777"/><path d="M0.4 2.3H6.6M0.4 3.8H6.6M0.4 5.2H6.6" stroke="#fff" stroke-width="0.5"/><path d="M2.4 2.3V6.4" stroke="#fff" stroke-width="0.5"/></svg><div style="position:absolute;left:51.300000000000004px;top:28.14px;font-size:5.6px;line-height:1.15;color:#333;white-space:nowrap;-webkit-text-stroke:0.15px #333;">dbo.actors</div><svg style="position:absolute;left:32.90px;top:37.35px" width="3" height="4" viewBox="0 0 3 4"><path d="M0.3 0.2V3.8L2.8 2Z" fill="#5aa0e8"/></svg><svg style="position:absolute;left:40.30px;top:35.85px" width="7" height="7" viewBox="0 0 7 7"><rect x="0.4" y="0.6" width="6.2" height="5.8" fill="#777"/><path d="M0.4 2.3H6.6M0.4 3.8H6.6M0.4 5.2H6.6" stroke="#fff" stroke-width="0.5"/><path d="M2.4 2.3V6.4" stroke="#fff" stroke-width="0.5"/></svg><div style="position:absolute;left:51.300000000000004px;top:36.80px;font-size:5.6px;line-height:1.15;color:#333;white-space:nowrap;-webkit-text-stroke:0.15px #333;">dbo.address</div><svg style="position:absolute;left:32.90px;top:46.01px" width="3" height="4" viewBox="0 0 3 4"><path d="M0.3 0.2V3.8L2.8 2Z" fill="#5aa0e8"/></svg><svg style="position:absolute;left:40.30px;top:44.51px" width="7" height="7" viewBox="0 0 7 7"><rect x="0.4" y="0.6" width="6.2" height="5.8" fill="#777"/><path d="M0.4 2.3H6.6M0.4 3.8H6.6M0.4 5.2H6.6" stroke="#fff" stroke-width="0.5"/><path d="M2.4 2.3V6.4" stroke="#fff" stroke-width="0.5"/></svg><div style="position:absolute;left:51.300000000000004px;top:45.47px;font-size:5.6px;line-height:1.15;color:#333;white-space:nowrap;-webkit-text-stroke:0.15px #333;">dbo.address_copy</div><svg style="position:absolute;left:32.90px;top:54.68px" width="3" height="4" viewBox="0 0 3 4"><path d="M0.3 0.2V3.8L2.8 2Z" fill="#5aa0e8"/></svg><svg style="position:absolute;left:40.30px;top:53.18px" width="7" height="7" viewBox="0 0 7 7"><rect x="0.4" y="0.6" width="6.2" height="5.8" fill="#777"/><path d="M0.4 2.3H6.6M0.4 3.8H6.6M0.4 5.2H6.6" stroke="#fff" stroke-width="0.5"/><path d="M2.4 2.3V6.4" stroke="#fff" stroke-width="0.5"/></svg><div style="position:absolute;left:51.300000000000004px;top:54.13px;font-size:5.6px;line-height:1.15;color:#333;white-space:nowrap;-webkit-text-stroke:0.15px #333;">dbo.category</div><svg style="position:absolute;left:32.90px;top:63.34px" width="3" height="4" viewBox="0 0 3 4"><path d="M0.3 0.2V3.8L2.8 2Z" fill="#5aa0e8"/></svg><svg style="position:absolute;left:40.30px;top:61.84px" width="7" height="7" viewBox="0 0 7 7"><rect x="0.4" y="0.6" width="6.2" height="5.8" fill="#777"/><path d="M0.4 2.3H6.6M0.4 3.8H6.6M0.4 5.2H6.6" stroke="#fff" stroke-width="0.5"/><path d="M2.4 2.3V6.4" stroke="#fff" stroke-width="0.5"/></svg><div style="position:absolute;left:51.300000000000004px;top:62.79px;font-size:5.6px;line-height:1.15;color:#333;white-space:nowrap;-webkit-text-stroke:0.15px #333;">dbo.city</div><svg style="position:absolute;left:32.90px;top:72.00px" width="3" height="4" viewBox="0 0 3 4"><path d="M0.3 0.2V3.8L2.8 2Z" fill="#5aa0e8"/></svg><svg style="position:absolute;left:40.30px;top:70.50px" width="7" height="7" viewBox="0 0 7 7"><rect x="0.4" y="0.6" width="6.2" height="5.8" fill="#777"/><path d="M0.4 2.3H6.6M0.4 3.8H6.6M0.4 5.2H6.6" stroke="#fff" stroke-width="0.5"/><path d="M2.4 2.3V6.4" stroke="#fff" stroke-width="0.5"/></svg><div style="position:absolute;left:51.300000000000004px;top:71.46px;font-size:5.6px;line-height:1.15;color:#333;white-space:nowrap;-webkit-text-stroke:0.15px #333;">dbo.city_copy</div><svg style="position:absolute;left:32.90px;top:80.67px" width="3" height="4" viewBox="0 0 3 4"><path d="M0.3 0.2V3.8L2.8 2Z" fill="#5aa0e8"/></svg><svg style="position:absolute;left:40.30px;top:79.17px" width="7" height="7" viewBox="0 0 7 7"><rect x="0.4" y="0.6" width="6.2" height="5.8" fill="#777"/><path d="M0.4 2.3H6.6M0.4 3.8H6.6M0.4 5.2H6.6" stroke="#fff" stroke-width="0.5"/><path d="M2.4 2.3V6.4" stroke="#fff" stroke-width="0.5"/></svg><div style="position:absolute;left:51.300000000000004px;top:80.12px;font-size:5.6px;line-height:1.15;color:#333;white-space:nowrap;-webkit-text-stroke:0.15px #333;">dbo.country</div><svg style="position:absolute;left:32.90px;top:89.33px" width="3" height="4" viewBox="0 0 3 4"><path d="M0.3 0.2V3.8L2.8 2Z" fill="#5aa0e8"/></svg><svg style="position:absolute;left:40.30px;top:87.83px" width="7" height="7" viewBox="0 0 7 7"><rect x="0.4" y="0.6" width="6.2" height="5.8" fill="#777"/><path d="M0.4 2.3H6.6M0.4 3.8H6.6M0.4 5.2H6.6" stroke="#fff" stroke-width="0.5"/><path d="M2.4 2.3V6.4" stroke="#fff" stroke-width="0.5"/></svg><div style="position:absolute;left:51.300000000000004px;top:88.78px;font-size:5.6px;line-height:1.15;color:#333;white-space:nowrap;-webkit-text-stroke:0.15px #333;">dbo.country_copy</div><svg style="position:absolute;left:32.90px;top:97.99px" width="3" height="4" viewBox="0 0 3 4"><path d="M0.3 0.2V3.8L2.8 2Z" fill="#5aa0e8"/></svg><svg style="position:absolute;left:40.30px;top:96.49px" width="7" height="7" viewBox="0 0 7 7"><rect x="0.4" y="0.6" width="6.2" height="5.8" fill="#777"/><path d="M0.4 2.3H6.6M0.4 3.8H6.6M0.4 5.2H6.6" stroke="#fff" stroke-width="0.5"/><path d="M2.4 2.3V6.4" stroke="#fff" stroke-width="0.5"/></svg><div style="position:absolute;left:51.300000000000004px;top:97.44px;font-size:5.6px;line-height:1.15;color:#333;white-space:nowrap;-webkit-text-stroke:0.15px #333;">dbo.customer</div><svg style="position:absolute;left:32.90px;top:106.66px" width="3" height="4" viewBox="0 0 3 4"><path d="M0.3 0.2V3.8L2.8 2Z" fill="#5aa0e8"/></svg><svg style="position:absolute;left:40.30px;top:105.16px" width="7" height="7" viewBox="0 0 7 7"><rect x="0.4" y="0.6" width="6.2" height="5.8" fill="#777"/><path d="M0.4 2.3H6.6M0.4 3.8H6.6M0.4 5.2H6.6" stroke="#fff" stroke-width="0.5"/><path d="M2.4 2.3V6.4" stroke="#fff" stroke-width="0.5"/></svg><div style="position:absolute;left:51.300000000000004px;top:106.11px;font-size:5.6px;line-height:1.15;color:#333;white-space:nowrap;-webkit-text-stroke:0.15px #333;">dbo.Employee</div><svg style="position:absolute;left:32.90px;top:115.32px" width="3" height="4" viewBox="0 0 3 4"><path d="M0.3 0.2V3.8L2.8 2Z" fill="#5aa0e8"/></svg><svg style="position:absolute;left:40.30px;top:113.82px" width="7" height="7" viewBox="0 0 7 7"><rect x="0.4" y="0.6" width="6.2" height="5.8" fill="#777"/><path d="M0.4 2.3H6.6M0.4 3.8H6.6M0.4 5.2H6.6" stroke="#fff" stroke-width="0.5"/><path d="M2.4 2.3V6.4" stroke="#fff" stroke-width="0.5"/></svg><div style="position:absolute;left:51.300000000000004px;top:114.77px;font-size:5.6px;line-height:1.15;color:#333;white-space:nowrap;-webkit-text-stroke:0.15px #333;">dbo.film</div><svg style="position:absolute;left:32.90px;top:123.98px" width="3" height="4" viewBox="0 0 3 4"><path d="M0.3 0.2V3.8L2.8 2Z" fill="#5aa0e8"/></svg><svg style="position:absolute;left:40.30px;top:122.48px" width="7" height="7" viewBox="0 0 7 7"><rect x="0.4" y="0.6" width="6.2" height="5.8" fill="#777"/><path d="M0.4 2.3H6.6M0.4 3.8H6.6M0.4 5.2H6.6" stroke="#fff" stroke-width="0.5"/><path d="M2.4 2.3V6.4" stroke="#fff" stroke-width="0.5"/></svg><div style="position:absolute;left:51.300000000000004px;top:123.43px;font-size:5.6px;line-height:1.15;color:#333;white-space:nowrap;-webkit-text-stroke:0.15px #333;">dbo.film_actor</div><svg style="position:absolute;left:32.90px;top:132.64px" width="3" height="4" viewBox="0 0 3 4"><path d="M0.3 0.2V3.8L2.8 2Z" fill="#5aa0e8"/></svg><svg style="position:absolute;left:40.30px;top:131.14px" width="7" height="7" viewBox="0 0 7 7"><rect x="0.4" y="0.6" width="6.2" height="5.8" fill="#777"/><path d="M0.4 2.3H6.6M0.4 3.8H6.6M0.4 5.2H6.6" stroke="#fff" stroke-width="0.5"/><path d="M2.4 2.3V6.4" stroke="#fff" stroke-width="0.5"/></svg><div style="position:absolute;left:51.300000000000004px;top:132.10px;font-size:5.6px;line-height:1.15;color:#333;white-space:nowrap;-webkit-text-stroke:0.15px #333;">dbo.inventory</div><svg style="position:absolute;left:32.90px;top:141.31px" width="3" height="4" viewBox="0 0 3 4"><path d="M0.3 0.2V3.8L2.8 2Z" fill="#5aa0e8"/></svg><svg style="position:absolute;left:40.30px;top:139.81px" width="7" height="7" viewBox="0 0 7 7"><rect x="0.4" y="0.6" width="6.2" height="5.8" fill="#777"/><path d="M0.4 2.3H6.6M0.4 3.8H6.6M0.4 5.2H6.6" stroke="#fff" stroke-width="0.5"/><path d="M2.4 2.3V6.4" stroke="#fff" stroke-width="0.5"/></svg><div style="position:absolute;left:51.300000000000004px;top:140.76px;font-size:5.6px;line-height:1.15;color:#333;white-space:nowrap;-webkit-text-stroke:0.15px #333;">dbo.language</div><svg style="position:absolute;left:32.90px;top:149.97px" width="3" height="4" viewBox="0 0 3 4"><path d="M0.3 0.2V3.8L2.8 2Z" fill="#5aa0e8"/></svg><svg style="position:absolute;left:40.30px;top:148.47px" width="7" height="7" viewBox="0 0 7 7"><rect x="0.4" y="0.6" width="6.2" height="5.8" fill="#777"/><path d="M0.4 2.3H6.6M0.4 3.8H6.6M0.4 5.2H6.6" stroke="#fff" stroke-width="0.5"/><path d="M2.4 2.3V6.4" stroke="#fff" stroke-width="0.5"/></svg><div style="position:absolute;left:51.300000000000004px;top:149.42px;font-size:5.6px;line-height:1.15;color:#333;white-space:nowrap;-webkit-text-stroke:0.15px #333;">dbo.new.store</div><svg style="position:absolute;left:32.90px;top:158.63px" width="3" height="4" viewBox="0 0 3 4"><path d="M0.3 0.2V3.8L2.8 2Z" fill="#5aa0e8"/></svg><svg style="position:absolute;left:40.30px;top:157.13px" width="7" height="7" viewBox="0 0 7 7"><rect x="0.4" y="0.6" width="6.2" height="5.8" fill="#777"/><path d="M0.4 2.3H6.6M0.4 3.8H6.6M0.4 5.2H6.6" stroke="#fff" stroke-width="0.5"/><path d="M2.4 2.3V6.4" stroke="#fff" stroke-width="0.5"/></svg><div style="position:absolute;left:51.300000000000004px;top:158.09px;font-size:5.6px;line-height:1.15;color:#333;white-space:nowrap;-webkit-text-stroke:0.15px #333;">dbo.rental</div><svg style="position:absolute;left:32.90px;top:167.30px" width="3" height="4" viewBox="0 0 3 4"><path d="M0.3 0.2V3.8L2.8 2Z" fill="#5aa0e8"/></svg><svg style="position:absolute;left:40.30px;top:165.80px" width="7" height="7" viewBox="0 0 7 7"><rect x="0.4" y="0.6" width="6.2" height="5.8" fill="#777"/><path d="M0.4 2.3H6.6M0.4 3.8H6.6M0.4 5.2H6.6" stroke="#fff" stroke-width="0.5"/><path d="M2.4 2.3V6.4" stroke="#fff" stroke-width="0.5"/></svg><div style="position:absolute;left:51.300000000000004px;top:166.75px;font-size:5.6px;line-height:1.15;color:#333;white-space:nowrap;-webkit-text-stroke:0.15px #333;">dbo.Sales</div><svg style="position:absolute;left:32.90px;top:175.96px" width="3" height="4" viewBox="0 0 3 4"><path d="M0.3 0.2V3.8L2.8 2Z" fill="#5aa0e8"/></svg><svg style="position:absolute;left:40.30px;top:174.46px" width="7" height="7" viewBox="0 0 7 7"><rect x="0.4" y="0.6" width="6.2" height="5.8" fill="#777"/><path d="M0.4 2.3H6.6M0.4 3.8H6.6M0.4 5.2H6.6" stroke="#fff" stroke-width="0.5"/><path d="M2.4 2.3V6.4" stroke="#fff" stroke-width="0.5"/></svg><div style="position:absolute;left:51.300000000000004px;top:175.41px;font-size:5.6px;line-height:1.15;color:#333;white-space:nowrap;-webkit-text-stroke:0.15px #333;">dbo.staff</div><svg style="position:absolute;left:32.90px;top:184.62px" width="3" height="4" viewBox="0 0 3 4"><path d="M0.3 0.2V3.8L2.8 2Z" fill="#5aa0e8"/></svg><svg style="position:absolute;left:40.30px;top:183.12px" width="7" height="7" viewBox="0 0 7 7"><rect x="0.4" y="0.6" width="6.2" height="5.8" fill="#777"/><path d="M0.4 2.3H6.6M0.4 3.8H6.6M0.4 5.2H6.6" stroke="#fff" stroke-width="0.5"/><path d="M2.4 2.3V6.4" stroke="#fff" stroke-width="0.5"/></svg><div style="position:absolute;left:51.300000000000004px;top:184.07px;font-size:5.6px;line-height:1.15;color:#333;white-space:nowrap;-webkit-text-stroke:0.15px #333;">dbo.store</div><svg style="position:absolute;left:23.10px;top:193.79px" width="4" height="3" viewBox="0 0 4 3"><path d="M0.3 0.3H3.7L2 2.7Z" fill="#5aa0e8"/></svg><svg style="position:absolute;left:31.00px;top:191.79px" width="7" height="7" viewBox="0 0 7 7"><path d="M0.3 2H2.8L3.5 2.8H6.2V6H0.3Z" fill="#e8e0c0"/><path d="M1 3.8H7L6.2 6H0.3Z" fill="#e0b868"/></svg><div style="position:absolute;left:42.00000000000002px;top:192.74px;font-size:5.6px;line-height:1.15;color:#333;white-space:nowrap;-webkit-text-stroke:0.15px #333;">Views (6)</div><svg style="position:absolute;left:32.90px;top:201.95px" width="3" height="4" viewBox="0 0 3 4"><path d="M0.3 0.2V3.8L2.8 2Z" fill="#5aa0e8"/></svg><svg style="position:absolute;left:40.30px;top:200.45px" width="7" height="7" viewBox="0 0 7 7"><path d="M0.3 1.5H2.8L3.5 2.3H6.7V6.2H0.3Z" fill="#d4b070"/><rect x="0.3" y="2.8" width="6.4" height="3.4" fill="#e2c282"/></svg><div style="position:absolute;left:51.300000000000004px;top:201.40px;font-size:5.6px;line-height:1.15;color:#333;white-space:nowrap;-webkit-text-stroke:0.15px #333;">System Views</div><svg style="position:absolute;left:32.90px;top:210.61px" width="3" height="4" viewBox="0 0 3 4"><path d="M0.3 0.2V3.8L2.8 2Z" fill="#5aa0e8"/></svg><svg style="position:absolute;left:40.30px;top:209.11px" width="7" height="7" viewBox="0 0 7 7"><rect x="0.9" y="0.6" width="5.8" height="5.8" fill="none" stroke="#777" stroke-width="0.8"/><path d="M0.9 2.3H6.7M0.9 4H6.7" stroke="#777" stroke-width="0.6"/><path d="M0.3 1.2V6.8H5.5" fill="none" stroke="#999" stroke-width="0.6"/></svg><div style="position:absolute;left:51.300000000000004px;top:210.06px;font-size:5.6px;line-height:1.15;color:#333;white-space:nowrap;-webkit-text-stroke:0.15px #333;">dbo.customer_list</div><svg style="position:absolute;left:32.90px;top:219.28px" width="3" height="4" viewBox="0 0 3 4"><path d="M0.3 0.2V3.8L2.8 2Z" fill="#5aa0e8"/></svg><svg style="position:absolute;left:40.30px;top:217.78px" width="7" height="7" viewBox="0 0 7 7"><rect x="0.9" y="0.6" width="5.8" height="5.8" fill="none" stroke="#777" stroke-width="0.8"/><path d="M0.9 2.3H6.7M0.9 4H6.7" stroke="#777" stroke-width="0.6"/><path d="M0.3 1.2V6.8H5.5" fill="none" stroke="#999" stroke-width="0.6"/></svg><div style="position:absolute;left:51.300000000000004px;top:218.73px;font-size:5.6px;line-height:1.15;color:#333;white-space:nowrap;-webkit-text-stroke:0.15px #333;">dbo.staff_list</div><svg style="position:absolute;left:32.90px;top:227.94px" width="3" height="4" viewBox="0 0 3 4"><path d="M0.3 0.2V3.8L2.8 2Z" fill="#5aa0e8"/></svg><svg style="position:absolute;left:40.30px;top:226.44px" width="7" height="7" viewBox="0 0 7 7"><rect x="0.9" y="0.6" width="5.8" height="5.8" fill="none" stroke="#777" stroke-width="0.8"/><path d="M0.9 2.3H6.7M0.9 4H6.7" stroke="#777" stroke-width="0.6"/><path d="M0.3 1.2V6.8H5.5" fill="none" stroke="#999" stroke-width="0.6"/></svg><div style="position:absolute;left:51.300000000000004px;top:227.39px;font-size:5.6px;line-height:1.15;color:#333;white-space:nowrap;-webkit-text-stroke:0.15px #333;">tSQLt.Private_SysIndexes</div><svg style="position:absolute;left:32.90px;top:236.60px" width="3" height="4" viewBox="0 0 3 4"><path d="M0.3 0.2V3.8L2.8 2Z" fill="#5aa0e8"/></svg><svg style="position:absolute;left:40.30px;top:235.10px" width="7" height="7" viewBox="0 0 7 7"><rect x="0.9" y="0.6" width="5.8" height="5.8" fill="none" stroke="#777" stroke-width="0.8"/><path d="M0.9 2.3H6.7M0.9 4H6.7" stroke="#777" stroke-width="0.6"/><path d="M0.3 1.2V6.8H5.5" fill="none" stroke="#999" stroke-width="0.6"/></svg><div style="position:absolute;left:51.300000000000004px;top:236.05px;font-size:5.6px;line-height:1.15;color:#333;white-space:nowrap;-webkit-text-stroke:0.15px #333;">tSQLt.Private_SysTypes</div><svg style="position:absolute;left:32.90px;top:245.26px" width="3" height="4" viewBox="0 0 3 4"><path d="M0.3 0.2V3.8L2.8 2Z" fill="#5aa0e8"/></svg><svg style="position:absolute;left:40.30px;top:243.76px" width="7" height="7" viewBox="0 0 7 7"><rect x="0.9" y="0.6" width="5.8" height="5.8" fill="none" stroke="#777" stroke-width="0.8"/><path d="M0.9 2.3H6.7M0.9 4H6.7" stroke="#777" stroke-width="0.6"/><path d="M0.3 1.2V6.8H5.5" fill="none" stroke="#999" stroke-width="0.6"/></svg><div style="position:absolute;left:51.300000000000004px;top:244.72px;font-size:5.6px;line-height:1.15;color:#333;white-space:nowrap;-webkit-text-stroke:0.15px #333;">tSQLt.TestClasses</div><svg style="position:absolute;left:32.90px;top:253.93px" width="3" height="4" viewBox="0 0 3 4"><path d="M0.3 0.2V3.8L2.8 2Z" fill="#5aa0e8"/></svg><svg style="position:absolute;left:40.30px;top:252.43px" width="7" height="7" viewBox="0 0 7 7"><rect x="0.9" y="0.6" width="5.8" height="5.8" fill="none" stroke="#777" stroke-width="0.8"/><path d="M0.9 2.3H6.7M0.9 4H6.7" stroke="#777" stroke-width="0.6"/><path d="M0.3 1.2V6.8H5.5" fill="none" stroke="#999" stroke-width="0.6"/></svg><div style="position:absolute;left:51.300000000000004px;top:253.38px;font-size:5.6px;line-height:1.15;color:#333;white-space:nowrap;-webkit-text-stroke:0.15px #333;">tSQLt.Tests</div><svg style="position:absolute;left:23.60px;top:262.59px" width="3" height="4" viewBox="0 0 3 4"><path d="M0.3 0.2V3.8L2.8 2Z" fill="#5aa0e8"/></svg><svg style="position:absolute;left:31.00px;top:261.09px" width="7" height="7" viewBox="0 0 7 7"><path d="M0.3 1.5H2.8L3.5 2.3H6.7V6.2H0.3Z" fill="#d4b070"/><rect x="0.3" y="2.8" width="6.4" height="3.4" fill="#e2c282"/></svg><div style="position:absolute;left:42.00000000000002px;top:262.04px;font-size:5.6px;line-height:1.15;color:#333;white-space:nowrap;-webkit-text-stroke:0.15px #333;">Synonyms</div></div><div style="position:absolute;left:274px;top:86px;width:3.5px;height:306.5px;background:#e6e6ec"></div><div style="position:absolute;left:277.5px;top:86px;width:401.5px;height:15px;background:#eeeef3"></div><div style="position:absolute;left:277.3px;top:87px;width:74.6px;height:14px;background:#1a78c8"></div><svg style="position:absolute;left:283px;top:90px" width="7" height="8" viewBox="0 0 7 8"><rect x="0.5" y="3" width="6" height="4.5" fill="#d8c8a0"/><path d="M1.5 3L2.5 0.5M5 3L4 0.5" stroke="#e8d8b0" stroke-width="0.8"/><rect x="1.5" y="4" width="1.5" height="1.5" fill="#8a6ac0"/><rect x="4" y="5" width="1.5" height="1.5" fill="#8a6ac0"/></svg><div style="position:absolute;left:290.6px;top:90.93px;font-size:6.5px;line-height:1.15;color:#fff;white-space:nowrap;-webkit-text-stroke:0.15px #fff;font-style:italic">Diagram1.dbd*</div><div style="position:absolute;left:342.6px;top:91.5px;width:3.8px;height:5px;background:#1458a0"></div><svg style="position:absolute;left:666.50px;top:90.00px" width="7" height="7" viewBox="0 0 7 7"><path d="M2 3L5 3L3.5 4.6Z" fill="#666"/></svg><svg style="position:absolute;left:277.5px;top:101px" width="391.3" height="282.5"><rect width="100%" height="100%" fill="#ffffff"/><line x1="7.52" y1="0" x2="7.52" y2="282.5" stroke="#f4f4f7" stroke-width="0.9"/><line x1="12.64" y1="0" x2="12.64" y2="282.5" stroke="#f4f4f7" stroke-width="0.9"/><line x1="17.76" y1="0" x2="17.76" y2="282.5" stroke="#f4f4f7" stroke-width="0.9"/><line x1="22.88" y1="0" x2="22.88" y2="282.5" stroke="#f4f4f7" stroke-width="0.9"/><line x1="33.12" y1="0" x2="33.12" y2="282.5" stroke="#f4f4f7" stroke-width="0.9"/><line x1="38.24" y1="0" x2="38.24" y2="282.5" stroke="#f4f4f7" stroke-width="0.9"/><line x1="43.36" y1="0" x2="43.36" y2="282.5" stroke="#f4f4f7" stroke-width="0.9"/><line x1="48.48" y1="0" x2="48.48" y2="282.5" stroke="#f4f4f7" stroke-width="0.9"/><line x1="58.72" y1="0" x2="58.72" y2="282.5" stroke="#f4f4f7" stroke-width="0.9"/><line x1="63.84" y1="0" x2="63.84" y2="282.5" stroke="#f4f4f7" stroke-width="0.9"/><line x1="68.96" y1="0" x2="68.96" y2="282.5" stroke="#f4f4f7" stroke-width="0.9"/><line x1="74.08" y1="0" x2="74.08" y2="282.5" stroke="#f4f4f7" stroke-width="0.9"/><line x1="84.32" y1="0" x2="84.32" y2="282.5" stroke="#f4f4f7" stroke-width="0.9"/><line x1="89.44" y1="0" x2="89.44" y2="282.5" stroke="#f4f4f7" stroke-width="0.9"/><line x1="94.56" y1="0" x2="94.56" y2="282.5" stroke="#f4f4f7" stroke-width="0.9"/><line x1="99.68" y1="0" x2="99.68" y2="282.5" stroke="#f4f4f7" stroke-width="0.9"/><line x1="109.92" y1="0" x2="109.92" y2="282.5" stroke="#f4f4f7" stroke-width="0.9"/><line x1="115.04" y1="0" x2="115.04" y2="282.5" stroke="#f4f4f7" stroke-width="0.9"/><line x1="120.16" y1="0" x2="120.16" y2="282.5" stroke="#f4f4f7" stroke-width="0.9"/><line x1="125.28" y1="0" x2="125.28" y2="282.5" stroke="#f4f4f7" stroke-width="0.9"/><line x1="135.52" y1="0" x2="135.52" y2="282.5" stroke="#f4f4f7" stroke-width="0.9"/><line x1="140.64" y1="0" x2="140.64" y2="282.5" stroke="#f4f4f7" stroke-width="0.9"/><line x1="145.76" y1="0" x2="145.76" y2="282.5" stroke="#f4f4f7" stroke-width="0.9"/><line x1="150.88" y1="0" x2="150.88" y2="282.5" stroke="#f4f4f7" stroke-width="0.9"/><line x1="161.12" y1="0" x2="161.12" y2="282.5" stroke="#f4f4f7" stroke-width="0.9"/><line x1="166.24" y1="0" x2="166.24" y2="282.5" stroke="#f4f4f7" stroke-width="0.9"/><line x1="171.36" y1="0" x2="171.36" y2="282.5" stroke="#f4f4f7" stroke-width="0.9"/><line x1="176.48" y1="0" x2="176.48" y2="282.5" stroke="#f4f4f7" stroke-width="0.9"/><line x1="186.72" y1="0" x2="186.72" y2="282.5" stroke="#f4f4f7" stroke-width="0.9"/><line x1="191.84" y1="0" x2="191.84" y2="282.5" stroke="#f4f4f7" stroke-width="0.9"/><line x1="196.96" y1="0" x2="196.96" y2="282.5" stroke="#f4f4f7" stroke-width="0.9"/><line x1="202.08" y1="0" x2="202.08" y2="282.5" stroke="#f4f4f7" stroke-width="0.9"/><line x1="212.32" y1="0" x2="212.32" y2="282.5" stroke="#f4f4f7" stroke-width="0.9"/><line x1="217.44" y1="0" x2="217.44" y2="282.5" stroke="#f4f4f7" stroke-width="0.9"/><line x1="222.56" y1="0" x2="222.56" y2="282.5" stroke="#f4f4f7" stroke-width="0.9"/><line x1="227.68" y1="0" x2="227.68" y2="282.5" stroke="#f4f4f7" stroke-width="0.9"/><line x1="237.92" y1="0" x2="237.92" y2="282.5" stroke="#f4f4f7" stroke-width="0.9"/><line x1="243.04" y1="0" x2="243.04" y2="282.5" stroke="#f4f4f7" stroke-width="0.9"/><line x1="248.16" y1="0" x2="248.16" y2="282.5" stroke="#f4f4f7" stroke-width="0.9"/><line x1="253.28" y1="0" x2="253.28" y2="282.5" stroke="#f4f4f7" stroke-width="0.9"/><line x1="263.52" y1="0" x2="263.52" y2="282.5" stroke="#f4f4f7" stroke-width="0.9"/><line x1="268.64" y1="0" x2="268.64" y2="282.5" stroke="#f4f4f7" stroke-width="0.9"/><line x1="273.76" y1="0" x2="273.76" y2="282.5" stroke="#f4f4f7" stroke-width="0.9"/><line x1="278.88" y1="0" x2="278.88" y2="282.5" stroke="#f4f4f7" stroke-width="0.9"/><line x1="289.12" y1="0" x2="289.12" y2="282.5" stroke="#f4f4f7" stroke-width="0.9"/><line x1="294.24" y1="0" x2="294.24" y2="282.5" stroke="#f4f4f7" stroke-width="0.9"/><line x1="299.36" y1="0" x2="299.36" y2="282.5" stroke="#f4f4f7" stroke-width="0.9"/><line x1="304.48" y1="0" x2="304.48" y2="282.5" stroke="#f4f4f7" stroke-width="0.9"/><line x1="314.72" y1="0" x2="314.72" y2="282.5" stroke="#f4f4f7" stroke-width="0.9"/><line x1="319.84" y1="0" x2="319.84" y2="282.5" stroke="#f4f4f7" stroke-width="0.9"/><line x1="324.96" y1="0" x2="324.96" y2="282.5" stroke="#f4f4f7" stroke-width="0.9"/><line x1="330.08" y1="0" x2="330.08" y2="282.5" stroke="#f4f4f7" stroke-width="0.9"/><line x1="340.32" y1="0" x2="340.32" y2="282.5" stroke="#f4f4f7" stroke-width="0.9"/><line x1="345.44" y1="0" x2="345.44" y2="282.5" stroke="#f4f4f7" stroke-width="0.9"/><line x1="350.56" y1="0" x2="350.56" y2="282.5" stroke="#f4f4f7" stroke-width="0.9"/><line x1="355.68" y1="0" x2="355.68" y2="282.5" stroke="#f4f4f7" stroke-width="0.9"/><line x1="365.92" y1="0" x2="365.92" y2="282.5" stroke="#f4f4f7" stroke-width="0.9"/><line x1="371.04" y1="0" x2="371.04" y2="282.5" stroke="#f4f4f7" stroke-width="0.9"/><line x1="376.16" y1="0" x2="376.16" y2="282.5" stroke="#f4f4f7" stroke-width="0.9"/><line x1="381.28" y1="0" x2="381.28" y2="282.5" stroke="#f4f4f7" stroke-width="0.9"/><line x1="0" y1="4.82" x2="391.29999999999995" y2="4.82" stroke="#f4f4f7" stroke-width="0.9"/><line x1="0" y1="9.94" x2="391.29999999999995" y2="9.94" stroke="#f4f4f7" stroke-width="0.9"/><line x1="0" y1="15.06" x2="391.29999999999995" y2="15.06" stroke="#f4f4f7" stroke-width="0.9"/><line x1="0" y1="20.18" x2="391.29999999999995" y2="20.18" stroke="#f4f4f7" stroke-width="0.9"/><line x1="0" y1="30.42" x2="391.29999999999995" y2="30.42" stroke="#f4f4f7" stroke-width="0.9"/><line x1="0" y1="35.54" x2="391.29999999999995" y2="35.54" stroke="#f4f4f7" stroke-width="0.9"/><line x1="0" y1="40.66" x2="391.29999999999995" y2="40.66" stroke="#f4f4f7" stroke-width="0.9"/><line x1="0" y1="45.78" x2="391.29999999999995" y2="45.78" stroke="#f4f4f7" stroke-width="0.9"/><line x1="0" y1="56.02" x2="391.29999999999995" y2="56.02" stroke="#f4f4f7" stroke-width="0.9"/><line x1="0" y1="61.14" x2="391.29999999999995" y2="61.14" stroke="#f4f4f7" stroke-width="0.9"/><line x1="0" y1="66.26" x2="391.29999999999995" y2="66.26" stroke="#f4f4f7" stroke-width="0.9"/><line x1="0" y1="71.38" x2="391.29999999999995" y2="71.38" stroke="#f4f4f7" stroke-width="0.9"/><line x1="0" y1="81.62" x2="391.29999999999995" y2="81.62" stroke="#f4f4f7" stroke-width="0.9"/><line x1="0" y1="86.74" x2="391.29999999999995" y2="86.74" stroke="#f4f4f7" stroke-width="0.9"/><line x1="0" y1="91.86" x2="391.29999999999995" y2="91.86" stroke="#f4f4f7" stroke-width="0.9"/><line x1="0" y1="96.98" x2="391.29999999999995" y2="96.98" stroke="#f4f4f7" stroke-width="0.9"/><line x1="0" y1="107.22" x2="391.29999999999995" y2="107.22" stroke="#f4f4f7" stroke-width="0.9"/><line x1="0" y1="112.34" x2="391.29999999999995" y2="112.34" stroke="#f4f4f7" stroke-width="0.9"/><line x1="0" y1="117.46" x2="391.29999999999995" y2="117.46" stroke="#f4f4f7" stroke-width="0.9"/><line x1="0" y1="122.58" x2="391.29999999999995" y2="122.58" stroke="#f4f4f7" stroke-width="0.9"/><line x1="0" y1="132.82" x2="391.29999999999995" y2="132.82" stroke="#f4f4f7" stroke-width="0.9"/><line x1="0" y1="137.94" x2="391.29999999999995" y2="137.94" stroke="#f4f4f7" stroke-width="0.9"/><line x1="0" y1="143.06" x2="391.29999999999995" y2="143.06" stroke="#f4f4f7" stroke-width="0.9"/><line x1="0" y1="148.18" x2="391.29999999999995" y2="148.18" stroke="#f4f4f7" stroke-width="0.9"/><line x1="0" y1="158.42" x2="391.29999999999995" y2="158.42" stroke="#f4f4f7" stroke-width="0.9"/><line x1="0" y1="163.54" x2="391.29999999999995" y2="163.54" stroke="#f4f4f7" stroke-width="0.9"/><line x1="0" y1="168.66" x2="391.29999999999995" y2="168.66" stroke="#f4f4f7" stroke-width="0.9"/><line x1="0" y1="173.78" x2="391.29999999999995" y2="173.78" stroke="#f4f4f7" stroke-width="0.9"/><line x1="0" y1="184.02" x2="391.29999999999995" y2="184.02" stroke="#f4f4f7" stroke-width="0.9"/><line x1="0" y1="189.14" x2="391.29999999999995" y2="189.14" stroke="#f4f4f7" stroke-width="0.9"/><line x1="0" y1="194.26" x2="391.29999999999995" y2="194.26" stroke="#f4f4f7" stroke-width="0.9"/><line x1="0" y1="199.38" x2="391.29999999999995" y2="199.38" stroke="#f4f4f7" stroke-width="0.9"/><line x1="0" y1="209.62" x2="391.29999999999995" y2="209.62" stroke="#f4f4f7" stroke-width="0.9"/><line x1="0" y1="214.74" x2="391.29999999999995" y2="214.74" stroke="#f4f4f7" stroke-width="0.9"/><line x1="0" y1="219.86" x2="391.29999999999995" y2="219.86" stroke="#f4f4f7" stroke-width="0.9"/><line x1="0" y1="224.98" x2="391.29999999999995" y2="224.98" stroke="#f4f4f7" stroke-width="0.9"/><line x1="0" y1="235.22" x2="391.29999999999995" y2="235.22" stroke="#f4f4f7" stroke-width="0.9"/><line x1="0" y1="240.34" x2="391.29999999999995" y2="240.34" stroke="#f4f4f7" stroke-width="0.9"/><line x1="0" y1="245.46" x2="391.29999999999995" y2="245.46" stroke="#f4f4f7" stroke-width="0.9"/><line x1="0" y1="250.58" x2="391.29999999999995" y2="250.58" stroke="#f4f4f7" stroke-width="0.9"/><line x1="0" y1="260.82" x2="391.29999999999995" y2="260.82" stroke="#f4f4f7" stroke-width="0.9"/><line x1="0" y1="265.94" x2="391.29999999999995" y2="265.94" stroke="#f4f4f7" stroke-width="0.9"/><line x1="0" y1="271.06" x2="391.29999999999995" y2="271.06" stroke="#f4f4f7" stroke-width="0.9"/><line x1="0" y1="276.18" x2="391.29999999999995" y2="276.18" stroke="#f4f4f7" stroke-width="0.9"/><line x1="2.40" y1="0" x2="2.40" y2="282.5" stroke="#e2e2e8" stroke-width="0.9"/><line x1="53.60" y1="0" x2="53.60" y2="282.5" stroke="#e2e2e8" stroke-width="0.9"/><line x1="79.20" y1="0" x2="79.20" y2="282.5" stroke="#e2e2e8" stroke-width="0.9"/><line x1="104.80" y1="0" x2="104.80" y2="282.5" stroke="#e2e2e8" stroke-width="0.9"/><line x1="130.40" y1="0" x2="130.40" y2="282.5" stroke="#e2e2e8" stroke-width="0.9"/><line x1="181.60" y1="0" x2="181.60" y2="282.5" stroke="#e2e2e8" stroke-width="0.9"/><line x1="207.20" y1="0" x2="207.20" y2="282.5" stroke="#e2e2e8" stroke-width="0.9"/><line x1="232.80" y1="0" x2="232.80" y2="282.5" stroke="#e2e2e8" stroke-width="0.9"/><line x1="258.40" y1="0" x2="258.40" y2="282.5" stroke="#e2e2e8" stroke-width="0.9"/><line x1="309.60" y1="0" x2="309.60" y2="282.5" stroke="#e2e2e8" stroke-width="0.9"/><line x1="335.20" y1="0" x2="335.20" y2="282.5" stroke="#e2e2e8" stroke-width="0.9"/><line x1="360.80" y1="0" x2="360.80" y2="282.5" stroke="#e2e2e8" stroke-width="0.9"/><line x1="386.40" y1="0" x2="386.40" y2="282.5" stroke="#e2e2e8" stroke-width="0.9"/><line x1="0" y1="25.30" x2="391.29999999999995" y2="25.30" stroke="#e2e2e8" stroke-width="0.9"/><line x1="0" y1="50.90" x2="391.29999999999995" y2="50.90" stroke="#e2e2e8" stroke-width="0.9"/><line x1="0" y1="102.10" x2="391.29999999999995" y2="102.10" stroke="#e2e2e8" stroke-width="0.9"/><line x1="0" y1="127.70" x2="391.29999999999995" y2="127.70" stroke="#e2e2e8" stroke-width="0.9"/><line x1="0" y1="153.30" x2="391.29999999999995" y2="153.30" stroke="#e2e2e8" stroke-width="0.9"/><line x1="0" y1="178.90" x2="391.29999999999995" y2="178.90" stroke="#e2e2e8" stroke-width="0.9"/><line x1="0" y1="230.10" x2="391.29999999999995" y2="230.10" stroke="#e2e2e8" stroke-width="0.9"/><line x1="0" y1="255.70" x2="391.29999999999995" y2="255.70" stroke="#e2e2e8" stroke-width="0.9"/><line x1="0" y1="281.30" x2="391.29999999999995" y2="281.30" stroke="#e2e2e8" stroke-width="0.9"/><line x1="28.00" y1="0" x2="28.00" y2="282.5" stroke="#d2d2d8" stroke-width="0.9"/><line x1="156.00" y1="0" x2="156.00" y2="282.5" stroke="#d2d2d8" stroke-width="0.9"/><line x1="284.00" y1="0" x2="284.00" y2="282.5" stroke="#d2d2d8" stroke-width="0.9"/><line x1="0" y1="76.50" x2="391.29999999999995" y2="76.50" stroke="#d2d2d8" stroke-width="0.9"/><line x1="0" y1="204.50" x2="391.29999999999995" y2="204.50" stroke="#d2d2d8" stroke-width="0.9"/></svg><div style="position:absolute;left:668.8px;top:101px;width:10.2px;height:282.5px;background:#f8f8fa"></div><div style="position:absolute;left:669px;top:200px;width:8.7px;height:81.5px;background:#c6dcf2"></div><svg style="position:absolute;left:671.5px;top:104px" width="4" height="3" viewBox="0 0 4 3"><path d="M0 3L2 0.5L4 3Z" fill="#555"/></svg><svg style="position:absolute;left:671.5px;top:377.5px" width="4" height="3" viewBox="0 0 4 3"><path d="M0 0L2 2.5L4 0Z" fill="#555"/></svg><div style="position:absolute;left:277.5px;top:383.5px;width:401.5px;height:9px;background:#f8f8fa"></div><div style="position:absolute;left:410.5px;top:383.8px;width:126px;height:8.5px;background:#dcdce0"></div><svg style="position:absolute;left:281px;top:386px" width="3" height="4" viewBox="0 0 3 4"><path d="M3 0L0.5 2L3 4Z" fill="#555"/></svg><svg style="position:absolute;left:663.5px;top:386px" width="3" height="4" viewBox="0 0 3 4"><path d="M0 0L2.5 2L0 4Z" fill="#555"/></svg><svg style="position:absolute;left:670.00px;top:384.50px" width="7" height="7" viewBox="0 0 7 7"><circle cx="2.8" cy="2.8" r="2" fill="none" stroke="#444" stroke-width="1"/><path d="M4.3 4.3L6.5 6.5" stroke="#444" stroke-width="1.3"/></svg><div style="position:absolute;left:153px;top:392.5px;width:526px;height:15.5px;background:#eeeef3"></div><svg style="position:absolute;left:160.5px;top:398.5px" width="9" height="8" viewBox="0 0 9 8"><path d="M4 0.5H0.5V7.5H4" fill="none" stroke="#555" stroke-width="0.8"/><circle cx="6" cy="4" r="1.6" fill="#333"/><path d="M2.5 4H5" stroke="#333" stroke-width="0.9"/></svg><div style="position:absolute;left:170px;top:399.84px;font-size:5.8px;line-height:1.15;color:#333;white-space:nowrap;-webkit-text-stroke:0.15px #333;">Output</div><div style="position:absolute;left:153px;top:408px;width:526px;height:14px;background:#f8f8fa"></div><div style="position:absolute;left:277.5px;top:101px;width:391.3px;height:282.5px;overflow:hidden"><div style="position:absolute;left:49.90px;top:29.50px;width:79.60px;height:13.00px;background:linear-gradient(rgba(255,255,255,0.85),#fff)"></div><svg style="position:absolute;left:51.80px;top:32.40px" width="7.2" height="7.2" viewBox="0 0 7.2 7.2"><rect x="0.3" y="0.3" width="6.6" height="6.6" fill="#5a5a5a"/><path d="M0.3 2.3H6.9M0.3 3.9H6.9M0.3 5.4H6.9" stroke="#eee" stroke-width="0.5"/><path d="M2.3 2.3V6.9" stroke="#eee" stroke-width="0.5"/></svg><div style="position:absolute;left:59.90px;top:32.52px;font-size:6.8px;line-height:1.2;color:#111;white-space:nowrap;-webkit-text-stroke:0.04px #111;font-weight:bold;letter-spacing:-0.1px;-webkit-text-stroke:0.3px #111">dbo.film_actor</div><svg style="position:absolute;left:121.50px;top:34.50px" width="4" height="3" viewBox="0 0 4 3"><path d="M0.3 2.6L2 0.6L3.7 2.6" fill="none" stroke="#666" stroke-width="0.8"/></svg><div style="position:absolute;left:51.30px;top:43.60px;width:80.20px;height:60.00px;border-radius:3px;background:rgba(0,0,0,0.24);filter:blur(0.7px)"></div><div style="position:absolute;left:50.00px;top:42.00px;width:80.20px;height:60.00px;box-sizing:border-box;border:1px solid #b4c0d4;border-radius:3px;background:linear-gradient(#e2eaf8,#eef3fb 50%,#f3f6fc)"></div><div style="position:absolute;left:51.00px;top:43.00px;width:78.20px;height:19.30px;background:linear-gradient(#dfe8f7,#e8eef9);border-radius:2px 2px 0 0"></div><div style="position:absolute;left:52.00px;top:62.30px;width:76.20px;height:0.80px;background:#b8c2d4"></div><svg style="position:absolute;left:51.50px;top:45.80px" width="8.5" height="7" viewBox="0 0 8.5 7"><path d="M0.3 0.4H3.4V2.8H2.6V6.6H1.1V2.8H0.3Z" fill="#2a2a2a"/><path d="M4.3 0.4H7.4V2.8H6.6V6.6H5.1V2.8H4.3Z" fill="#2a2a2a"/><rect x="1.3" y="1" width="1.1" height="1" fill="#ccd"/><rect x="5.3" y="1" width="1.1" height="1" fill="#ccd"/></svg><div style="position:absolute;left:60.40px;top:45.96px;font-size:6.4px;line-height:1.2;color:#2e2e2e;white-space:nowrap;-webkit-text-stroke:0.04px #2e2e2e;">actor_id</div><div style="position:absolute;left:96.30px;top:45.96px;font-size:6.4px;line-height:1.2;color:#2e2e2e;white-space:nowrap;-webkit-text-stroke:0.04px #2e2e2e;">int</div><svg style="position:absolute;left:51.50px;top:54.60px" width="8.5" height="7" viewBox="0 0 8.5 7"><path d="M0.3 0.4H3.4V2.8H2.6V6.6H1.1V2.8H0.3Z" fill="#2a2a2a"/><path d="M4.3 0.4H7.4V2.8H6.6V6.6H5.1V2.8H4.3Z" fill="#2a2a2a"/><rect x="1.3" y="1" width="1.1" height="1" fill="#ccd"/><rect x="5.3" y="1" width="1.1" height="1" fill="#ccd"/></svg><div style="position:absolute;left:60.40px;top:54.76px;font-size:6.4px;line-height:1.2;color:#2e2e2e;white-space:nowrap;-webkit-text-stroke:0.04px #2e2e2e;">film_id</div><div style="position:absolute;left:96.30px;top:54.76px;font-size:6.4px;line-height:1.2;color:#2e2e2e;white-space:nowrap;-webkit-text-stroke:0.04px #2e2e2e;">int</div><div style="position:absolute;left:60.40px;top:65.16px;font-size:6.4px;line-height:1.2;color:#2e2e2e;white-space:nowrap;-webkit-text-stroke:0.04px #2e2e2e;">last_update</div><div style="position:absolute;left:96.30px;top:65.16px;font-size:6.4px;line-height:1.2;color:#2e2e2e;white-space:nowrap;-webkit-text-stroke:0.04px #2e2e2e;">datetime</div><div style="position:absolute;left:60.40px;top:74.06px;font-size:6.4px;line-height:1.2;color:#9a9a9a;white-space:nowrap;-webkit-text-stroke:0.04px #9a9a9a;font-style:italic">Name</div><div style="position:absolute;left:96.30px;top:74.06px;font-size:6.4px;line-height:1.2;color:#9a9a9a;white-space:nowrap;-webkit-text-stroke:0.04px #9a9a9a;font-style:italic">varchar</div><div style="position:absolute;left:51.00px;top:83.50px;width:78.20px;height:8.60px;background:linear-gradient(#e4ebf6,#d8e2f2)"></div><div style="position:absolute;left:51.00px;top:92.00px;width:78.20px;height:0.60px;background:#f8faff"></div><svg style="position:absolute;left:53.00px;top:86.10px" width="3" height="3.2" viewBox="0 0 3 3.2"><path d="M0.2 0.2L2.6 1.6L0.2 3Z" fill="#444"/></svg><div style="position:absolute;left:59.40px;top:84.46px;font-size:6.4px;line-height:1.2;color:#333;white-space:nowrap;-webkit-text-stroke:0.04px #333;">Constraints</div><div style="position:absolute;left:51.00px;top:92.30px;width:78.20px;height:8.60px;background:linear-gradient(#e4ebf6,#d8e2f2)"></div><div style="position:absolute;left:51.00px;top:100.80px;width:78.20px;height:0.60px;background:#f8faff"></div><svg style="position:absolute;left:53.00px;top:94.90px" width="3" height="3.2" viewBox="0 0 3 3.2"><path d="M0.2 0.2L2.6 1.6L0.2 3Z" fill="#444"/></svg><div style="position:absolute;left:59.40px;top:93.26px;font-size:6.4px;line-height:1.2;color:#333;white-space:nowrap;-webkit-text-stroke:0.04px #333;">Indexes</div><div style="position:absolute;left:167.10px;top:44.30px;width:82.40px;height:13.00px;background:linear-gradient(rgba(255,255,255,0.85),#fff)"></div><svg style="position:absolute;left:169.00px;top:47.20px" width="7.2" height="7.2" viewBox="0 0 7.2 7.2"><rect x="0.3" y="0.3" width="6.6" height="6.6" fill="#5a5a5a"/><path d="M0.3 2.3H6.9M0.3 3.9H6.9M0.3 5.4H6.9" stroke="#eee" stroke-width="0.5"/><path d="M2.3 2.3V6.9" stroke="#eee" stroke-width="0.5"/></svg><div style="position:absolute;left:177.50px;top:47.32px;font-size:6.8px;line-height:1.2;color:#111;white-space:nowrap;-webkit-text-stroke:0.04px #111;font-weight:bold;letter-spacing:-0.1px;-webkit-text-stroke:0.3px #111">dbo.customer_list</div><svg style="position:absolute;left:241.50px;top:49.30px" width="4" height="3" viewBox="0 0 4 3"><path d="M0.3 2.6L2 0.6L3.7 2.6" fill="none" stroke="#666" stroke-width="0.8"/></svg><div style="position:absolute;left:168.30px;top:58.80px;width:83.50px;height:86.40px;border-radius:4px;background:rgba(0,0,0,0.2);filter:blur(0.7px)"></div><div style="position:absolute;left:167.00px;top:57.20px;width:83.50px;height:86.40px;border-radius:4px;background:linear-gradient(#e6f0d8,#f2f8ea 55%,#fafcf7)"></div><svg style="position:absolute;left:167.00px;top:57.20px" width="83.5" height="86.4" viewBox="0 0 83.5 86.4"><rect x="0.6" y="0.6" width="82.30" height="85.20" rx="4" fill="none" stroke="#959595" stroke-width="1.1" stroke-dasharray="2.2 0.9"/></svg><div style="position:absolute;left:177.50px;top:60.76px;font-size:6.4px;line-height:1.2;color:#2e2e2e;white-space:nowrap;-webkit-text-stroke:0.04px #2e2e2e;">ID</div><div style="position:absolute;left:204.20px;top:60.76px;font-size:6.4px;line-height:1.2;color:#2e2e2e;white-space:nowrap;-webkit-text-stroke:0.04px #2e2e2e;">int</div><div style="position:absolute;left:177.50px;top:69.76px;font-size:6.4px;line-height:1.2;color:#2e2e2e;white-space:nowrap;-webkit-text-stroke:0.04px #2e2e2e;">name</div><div style="position:absolute;left:204.20px;top:69.76px;font-size:6.4px;line-height:1.2;color:#2e2e2e;white-space:nowrap;-webkit-text-stroke:0.04px #2e2e2e;">varchar</div><div style="position:absolute;left:177.50px;top:78.36px;font-size:6.4px;line-height:1.2;color:#2e2e2e;white-space:nowrap;-webkit-text-stroke:0.04px #2e2e2e;">address</div><div style="position:absolute;left:204.20px;top:78.36px;font-size:6.4px;line-height:1.2;color:#2e2e2e;white-space:nowrap;-webkit-text-stroke:0.04px #2e2e2e;">varchar</div><div style="position:absolute;left:177.50px;top:87.26px;font-size:6.4px;line-height:1.2;color:#9a9a9a;white-space:nowrap;-webkit-text-stroke:0.04px #9a9a9a;font-style:italic">zip_code</div><div style="position:absolute;left:204.20px;top:87.26px;font-size:6.4px;line-height:1.2;color:#9a9a9a;white-space:nowrap;-webkit-text-stroke:0.04px #9a9a9a;font-style:italic">varchar</div><div style="position:absolute;left:177.50px;top:96.36px;font-size:6.4px;line-height:1.2;color:#2e2e2e;white-space:nowrap;-webkit-text-stroke:0.04px #2e2e2e;">phone</div><div style="position:absolute;left:204.20px;top:96.36px;font-size:6.4px;line-height:1.2;color:#2e2e2e;white-space:nowrap;-webkit-text-stroke:0.04px #2e2e2e;">varchar</div><div style="position:absolute;left:177.50px;top:105.16px;font-size:6.4px;line-height:1.2;color:#2e2e2e;white-space:nowrap;-webkit-text-stroke:0.04px #2e2e2e;">city</div><div style="position:absolute;left:204.20px;top:105.16px;font-size:6.4px;line-height:1.2;color:#2e2e2e;white-space:nowrap;-webkit-text-stroke:0.04px #2e2e2e;">varchar</div><div style="position:absolute;left:177.50px;top:113.56px;font-size:6.4px;line-height:1.2;color:#2e2e2e;white-space:nowrap;-webkit-text-stroke:0.04px #2e2e2e;">country</div><div style="position:absolute;left:204.20px;top:113.56px;font-size:6.4px;line-height:1.2;color:#2e2e2e;white-space:nowrap;-webkit-text-stroke:0.04px #2e2e2e;">varchar</div><div style="position:absolute;left:177.50px;top:122.36px;font-size:6.4px;line-height:1.2;color:#2e2e2e;white-space:nowrap;-webkit-text-stroke:0.04px #2e2e2e;">notes</div><div style="position:absolute;left:204.20px;top:122.36px;font-size:6.4px;line-height:1.2;color:#2e2e2e;white-space:nowrap;-webkit-text-stroke:0.04px #2e2e2e;">varchar</div><div style="position:absolute;left:177.50px;top:130.66px;font-size:6.4px;line-height:1.2;color:#2e2e2e;white-space:nowrap;-webkit-text-stroke:0.04px #2e2e2e;">SID</div><div style="position:absolute;left:204.20px;top:130.66px;font-size:6.4px;line-height:1.2;color:#2e2e2e;white-space:nowrap;-webkit-text-stroke:0.04px #2e2e2e;">int</div><div style="position:absolute;left:280.30px;top:9.50px;width:90.20px;height:13.00px;background:linear-gradient(rgba(255,255,255,0.85),#fff)"></div><svg style="position:absolute;left:282.20px;top:12.40px" width="7.2" height="7.2" viewBox="0 0 7.2 7.2"><rect x="0.3" y="0.3" width="6.6" height="6.6" fill="#5a5a5a"/><path d="M0.3 2.3H6.9M0.3 3.9H6.9M0.3 5.4H6.9" stroke="#eee" stroke-width="0.5"/><path d="M2.3 2.3V6.9" stroke="#eee" stroke-width="0.5"/></svg><div style="position:absolute;left:289.90px;top:12.52px;font-size:6.8px;line-height:1.2;color:#111;white-space:nowrap;-webkit-text-stroke:0.04px #111;font-weight:bold;letter-spacing:-0.1px;-webkit-text-stroke:0.3px #111">dbo.customer</div><svg style="position:absolute;left:362.50px;top:14.50px" width="4" height="3" viewBox="0 0 4 3"><path d="M0.3 2.6L2 0.6L3.7 2.6" fill="none" stroke="#666" stroke-width="0.8"/></svg><div style="position:absolute;left:280.20px;top:23.60px;width:91.60px;height:120.50px;border-radius:3px;background:rgba(0,0,0,0.24);filter:blur(0.7px)"></div><div style="position:absolute;left:278.90px;top:22.00px;width:91.60px;height:120.50px;box-sizing:border-box;border:1px solid #b4c0d4;border-radius:3px;background:linear-gradient(#e2eaf8,#eef3fb 50%,#f3f6fc)"></div><div style="position:absolute;left:279.90px;top:23.00px;width:89.60px;height:10.50px;background:linear-gradient(#dfe8f7,#e8eef9);border-radius:2px 2px 0 0"></div><div style="position:absolute;left:280.90px;top:33.50px;width:87.60px;height:0.80px;background:#b8c2d4"></div><svg style="position:absolute;left:280.70px;top:27.20px" width="8" height="4" viewBox="0 0 8 4"><path d="M0.3 2H5.5" stroke="#333" stroke-width="1.1"/><path d="M4.5 0.4L7.3 2L4.5 3.6Z" fill="#333"/></svg><div style="position:absolute;left:289.90px;top:25.96px;font-size:6.4px;line-height:1.2;color:#2e2e2e;white-space:nowrap;-webkit-text-stroke:0.04px #2e2e2e;">customer_id</div><div style="position:absolute;left:336.20px;top:25.96px;font-size:6.4px;line-height:1.2;color:#2e2e2e;white-space:nowrap;-webkit-text-stroke:0.04px #2e2e2e;">int</div><svg style="position:absolute;left:280.70px;top:38.20px" width="8" height="4" viewBox="0 0 8 4"><path d="M2.5 2H7.5" stroke="#555" stroke-width="0.9"/><path d="M3.2 0.5L0.6 2L3.2 3.5" fill="none" stroke="#555" stroke-width="0.8"/></svg><div style="position:absolute;left:289.90px;top:36.96px;font-size:6.4px;line-height:1.2;color:#2e2e2e;white-space:nowrap;-webkit-text-stroke:0.04px #2e2e2e;">store_id</div><div style="position:absolute;left:336.20px;top:36.96px;font-size:6.4px;line-height:1.2;color:#2e2e2e;white-space:nowrap;-webkit-text-stroke:0.04px #2e2e2e;">int</div><div style="position:absolute;left:289.90px;top:45.46px;font-size:6.4px;line-height:1.2;color:#2e2e2e;white-space:nowrap;-webkit-text-stroke:0.04px #2e2e2e;">first_name</div><div style="position:absolute;left:336.20px;top:45.46px;font-size:6.4px;line-height:1.2;color:#2e2e2e;white-space:nowrap;-webkit-text-stroke:0.04px #2e2e2e;">varchar</div><div style="position:absolute;left:289.90px;top:54.16px;font-size:6.4px;line-height:1.2;color:#2e2e2e;white-space:nowrap;-webkit-text-stroke:0.04px #2e2e2e;">last_name</div><div style="position:absolute;left:336.20px;top:54.16px;font-size:6.4px;line-height:1.2;color:#2e2e2e;white-space:nowrap;-webkit-text-stroke:0.04px #2e2e2e;">varchar</div><div style="position:absolute;left:289.90px;top:62.76px;font-size:6.4px;line-height:1.2;color:#9a9a9a;white-space:nowrap;-webkit-text-stroke:0.04px #9a9a9a;font-style:italic">email</div><div style="position:absolute;left:336.20px;top:62.76px;font-size:6.4px;line-height:1.2;color:#9a9a9a;white-space:nowrap;-webkit-text-stroke:0.04px #9a9a9a;font-style:italic">varchar</div><svg style="position:absolute;left:280.70px;top:72.60px" width="8" height="4" viewBox="0 0 8 4"><path d="M2.5 2H7.5" stroke="#555" stroke-width="0.9"/><path d="M3.2 0.5L0.6 2L3.2 3.5" fill="none" stroke="#555" stroke-width="0.8"/></svg><div style="position:absolute;left:289.90px;top:71.36px;font-size:6.4px;line-height:1.2;color:#2e2e2e;white-space:nowrap;-webkit-text-stroke:0.04px #2e2e2e;">address_id</div><div style="position:absolute;left:336.20px;top:71.36px;font-size:6.4px;line-height:1.2;color:#2e2e2e;white-space:nowrap;-webkit-text-stroke:0.04px #2e2e2e;">int</div><div style="position:absolute;left:289.90px;top:79.96px;font-size:6.4px;line-height:1.2;color:#2e2e2e;white-space:nowrap;-webkit-text-stroke:0.04px #2e2e2e;">active</div><div style="position:absolute;left:336.20px;top:79.96px;font-size:6.4px;line-height:1.2;color:#2e2e2e;white-space:nowrap;-webkit-text-stroke:0.04px #2e2e2e;">char</div><div style="position:absolute;left:289.90px;top:88.56px;font-size:6.4px;line-height:1.2;color:#2e2e2e;white-space:nowrap;-webkit-text-stroke:0.04px #2e2e2e;">create_date</div><div style="position:absolute;left:336.20px;top:88.56px;font-size:6.4px;line-height:1.2;color:#2e2e2e;white-space:nowrap;-webkit-text-stroke:0.04px #2e2e2e;">datetime</div><div style="position:absolute;left:289.90px;top:97.26px;font-size:6.4px;line-height:1.2;color:#2e2e2e;white-space:nowrap;-webkit-text-stroke:0.04px #2e2e2e;">last_update</div><div style="position:absolute;left:336.20px;top:97.26px;font-size:6.4px;line-height:1.2;color:#2e2e2e;white-space:nowrap;-webkit-text-stroke:0.04px #2e2e2e;">datetime</div><div style="position:absolute;left:289.90px;top:105.76px;font-size:6.4px;line-height:1.2;color:#9a9a9a;white-space:nowrap;-webkit-text-stroke:0.04px #9a9a9a;font-style:italic">Name</div><div style="position:absolute;left:336.20px;top:105.76px;font-size:6.4px;line-height:1.2;color:#9a9a9a;white-space:nowrap;-webkit-text-stroke:0.04px #9a9a9a;font-style:italic">varchar</div><div style="position:absolute;left:289.90px;top:114.36px;font-size:6.4px;line-height:1.2;color:#9a9a9a;white-space:nowrap;-webkit-text-stroke:0.04px #9a9a9a;font-style:italic">total_payments</div><div style="position:absolute;left:336.20px;top:114.36px;font-size:6.4px;line-height:1.2;color:#9a9a9a;white-space:nowrap;-webkit-text-stroke:0.04px #9a9a9a;font-style:italic">decimal</div><div style="position:absolute;left:279.90px;top:124.40px;width:89.60px;height:8.60px;background:linear-gradient(#e4ebf6,#d8e2f2)"></div><div style="position:absolute;left:279.90px;top:132.90px;width:89.60px;height:0.60px;background:#f8faff"></div><svg style="position:absolute;left:281.90px;top:127.00px" width="3" height="3.2" viewBox="0 0 3 3.2"><path d="M0.2 0.2L2.6 1.6L0.2 3Z" fill="#444"/></svg><div style="position:absolute;left:288.90px;top:125.36px;font-size:6.4px;line-height:1.2;color:#333;white-space:nowrap;-webkit-text-stroke:0.04px #333;">Constraints</div><div style="position:absolute;left:279.90px;top:133.10px;width:89.60px;height:8.60px;background:linear-gradient(#e4ebf6,#d8e2f2)"></div><div style="position:absolute;left:279.90px;top:141.60px;width:89.60px;height:0.60px;background:#f8faff"></div><svg style="position:absolute;left:281.90px;top:135.70px" width="3" height="3.2" viewBox="0 0 3 3.2"><path d="M0.2 0.2L2.6 1.6L0.2 3Z" fill="#444"/></svg><div style="position:absolute;left:288.90px;top:134.06px;font-size:6.4px;line-height:1.2;color:#333;white-space:nowrap;-webkit-text-stroke:0.04px #333;">Indexes</div><div style="position:absolute;left:8.70px;top:131.50px;width:80.20px;height:13.00px;background:linear-gradient(rgba(255,255,255,0.85),#fff)"></div><svg style="position:absolute;left:10.60px;top:134.40px" width="7.2" height="7.2" viewBox="0 0 7.2 7.2"><rect x="0.3" y="0.3" width="6.6" height="6.6" fill="#5a5a5a"/><path d="M0.3 2.3H6.9M0.3 3.9H6.9M0.3 5.4H6.9" stroke="#eee" stroke-width="0.5"/><path d="M2.3 2.3V6.9" stroke="#eee" stroke-width="0.5"/></svg><div style="position:absolute;left:19.30px;top:134.52px;font-size:6.8px;line-height:1.2;color:#111;white-space:nowrap;-webkit-text-stroke:0.04px #111;font-weight:bold;letter-spacing:-0.1px;-webkit-text-stroke:0.3px #111">dbo.city</div><svg style="position:absolute;left:80.90px;top:136.50px" width="4" height="3" viewBox="0 0 4 3"><path d="M0.3 2.6L2 0.6L3.7 2.6" fill="none" stroke="#666" stroke-width="0.8"/></svg><div style="position:absolute;left:10.80px;top:145.10px;width:79.60px;height:61.80px;border-radius:3px;background:rgba(0,0,0,0.24);filter:blur(0.7px)"></div><div style="position:absolute;left:9.50px;top:143.50px;width:79.60px;height:61.80px;box-sizing:border-box;border:1px solid #b4c0d4;border-radius:3px;background:linear-gradient(#e2eaf8,#eef3fb 50%,#f3f6fc)"></div><div style="position:absolute;left:10.50px;top:144.50px;width:77.60px;height:11.90px;background:linear-gradient(#dfe8f7,#e8eef9);border-radius:2px 2px 0 0"></div><div style="position:absolute;left:11.50px;top:156.40px;width:75.60px;height:0.80px;background:#b8c2d4"></div><svg style="position:absolute;left:11.30px;top:149.30px" width="8" height="4" viewBox="0 0 8 4"><path d="M0.3 2H5.5" stroke="#333" stroke-width="1.1"/><path d="M4.5 0.4L7.3 2L4.5 3.6Z" fill="#333"/></svg><div style="position:absolute;left:19.30px;top:148.06px;font-size:6.4px;line-height:1.2;color:#2e2e2e;white-space:nowrap;-webkit-text-stroke:0.04px #2e2e2e;">city_id</div><div style="position:absolute;left:55.00px;top:148.06px;font-size:6.4px;line-height:1.2;color:#2e2e2e;white-space:nowrap;-webkit-text-stroke:0.04px #2e2e2e;">int</div><div style="position:absolute;left:19.30px;top:158.76px;font-size:6.4px;line-height:1.2;color:#2e2e2e;white-space:nowrap;-webkit-text-stroke:0.04px #2e2e2e;">city</div><div style="position:absolute;left:55.00px;top:158.76px;font-size:6.4px;line-height:1.2;color:#2e2e2e;white-space:nowrap;-webkit-text-stroke:0.04px #2e2e2e;">varchar</div><svg style="position:absolute;left:11.30px;top:168.50px" width="8" height="4" viewBox="0 0 8 4"><path d="M2.5 2H7.5" stroke="#555" stroke-width="0.9"/><path d="M3.2 0.5L0.6 2L3.2 3.5" fill="none" stroke="#555" stroke-width="0.8"/></svg><div style="position:absolute;left:19.30px;top:167.26px;font-size:6.4px;line-height:1.2;color:#2e2e2e;white-space:nowrap;-webkit-text-stroke:0.04px #2e2e2e;">country_id</div><div style="position:absolute;left:55.00px;top:167.26px;font-size:6.4px;line-height:1.2;color:#2e2e2e;white-space:nowrap;-webkit-text-stroke:0.04px #2e2e2e;">smallint</div><div style="position:absolute;left:19.30px;top:175.76px;font-size:6.4px;line-height:1.2;color:#2e2e2e;white-space:nowrap;-webkit-text-stroke:0.04px #2e2e2e;">last_update</div><div style="position:absolute;left:55.00px;top:175.76px;font-size:6.4px;line-height:1.2;color:#2e2e2e;white-space:nowrap;-webkit-text-stroke:0.04px #2e2e2e;">datetime</div><div style="position:absolute;left:10.50px;top:185.70px;width:77.60px;height:8.60px;background:linear-gradient(#e4ebf6,#d8e2f2)"></div><div style="position:absolute;left:10.50px;top:194.20px;width:77.60px;height:0.60px;background:#f8faff"></div><svg style="position:absolute;left:12.50px;top:188.30px" width="3" height="3.2" viewBox="0 0 3 3.2"><path d="M0.2 0.2L2.6 1.6L0.2 3Z" fill="#444"/></svg><div style="position:absolute;left:18.30px;top:186.66px;font-size:6.4px;line-height:1.2;color:#333;white-space:nowrap;-webkit-text-stroke:0.04px #333;">Constraints</div><div style="position:absolute;left:10.50px;top:194.60px;width:77.60px;height:8.60px;background:linear-gradient(#e4ebf6,#d8e2f2)"></div><div style="position:absolute;left:10.50px;top:203.10px;width:77.60px;height:0.60px;background:#f8faff"></div><svg style="position:absolute;left:12.50px;top:197.20px" width="3" height="3.2" viewBox="0 0 3 3.2"><path d="M0.2 0.2L2.6 1.6L0.2 3Z" fill="#444"/></svg><div style="position:absolute;left:18.30px;top:195.56px;font-size:6.4px;line-height:1.2;color:#333;white-space:nowrap;-webkit-text-stroke:0.04px #333;">Indexes</div><div style="position:absolute;left:121.10px;top:207.80px;width:80.30px;height:13.00px;background:linear-gradient(rgba(255,255,255,0.85),#fff)"></div><svg style="position:absolute;left:123.00px;top:210.70px" width="7.2" height="7.2" viewBox="0 0 7.2 7.2"><rect x="0.3" y="0.3" width="6.6" height="6.6" fill="#5a5a5a"/><path d="M0.3 2.3H6.9M0.3 3.9H6.9M0.3 5.4H6.9" stroke="#eee" stroke-width="0.5"/><path d="M2.3 2.3V6.9" stroke="#eee" stroke-width="0.5"/></svg><div style="position:absolute;left:131.50px;top:210.82px;font-size:6.8px;line-height:1.2;color:#111;white-space:nowrap;-webkit-text-stroke:0.04px #111;font-weight:bold;letter-spacing:-0.1px;-webkit-text-stroke:0.3px #111">dbo.actors</div><svg style="position:absolute;left:193.40px;top:212.80px" width="4" height="3" viewBox="0 0 4 3"><path d="M0.3 2.6L2 0.6L3.7 2.6" fill="none" stroke="#666" stroke-width="0.8"/></svg><div style="position:absolute;left:122.80px;top:222.00px;width:79.50px;height:61.10px;border-radius:3px;background:rgba(0,0,0,0.24);filter:blur(0.7px)"></div><div style="position:absolute;left:121.50px;top:220.40px;width:79.50px;height:61.10px;box-sizing:border-box;border:1px solid #b4c0d4;border-radius:3px;background:linear-gradient(#e2eaf8,#eef3fb 50%,#f3f6fc)"></div><div style="position:absolute;left:122.50px;top:221.40px;width:77.50px;height:11.10px;background:linear-gradient(#dfe8f7,#e8eef9);border-radius:2px 2px 0 0"></div><div style="position:absolute;left:123.50px;top:232.50px;width:75.50px;height:0.80px;background:#b8c2d4"></div><svg style="position:absolute;left:123.30px;top:225.90px" width="8" height="4" viewBox="0 0 8 4"><path d="M0.3 2H5.5" stroke="#333" stroke-width="1.1"/><path d="M4.5 0.4L7.3 2L4.5 3.6Z" fill="#333"/></svg><div style="position:absolute;left:132.00px;top:224.66px;font-size:6.4px;line-height:1.2;color:#2e2e2e;white-space:nowrap;-webkit-text-stroke:0.04px #2e2e2e;">actor_id</div><div style="position:absolute;left:167.50px;top:224.66px;font-size:6.4px;line-height:1.2;color:#2e2e2e;white-space:nowrap;-webkit-text-stroke:0.04px #2e2e2e;">int</div><div style="position:absolute;left:132.00px;top:235.26px;font-size:6.4px;line-height:1.2;color:#2e2e2e;white-space:nowrap;-webkit-text-stroke:0.04px #2e2e2e;">first_name</div><div style="position:absolute;left:167.50px;top:235.26px;font-size:6.4px;line-height:1.2;color:#2e2e2e;white-space:nowrap;-webkit-text-stroke:0.04px #2e2e2e;">varchar</div><div style="position:absolute;left:132.00px;top:243.76px;font-size:6.4px;line-height:1.2;color:#2e2e2e;white-space:nowrap;-webkit-text-stroke:0.04px #2e2e2e;">last_name</div><div style="position:absolute;left:167.50px;top:243.76px;font-size:6.4px;line-height:1.2;color:#2e2e2e;white-space:nowrap;-webkit-text-stroke:0.04px #2e2e2e;">varchar</div><div style="position:absolute;left:132.00px;top:252.46px;font-size:6.4px;line-height:1.2;color:#2e2e2e;white-space:nowrap;-webkit-text-stroke:0.04px #2e2e2e;">last_update</div><div style="position:absolute;left:167.50px;top:252.46px;font-size:6.4px;line-height:1.2;color:#2e2e2e;white-space:nowrap;-webkit-text-stroke:0.04px #2e2e2e;">datetime</div><div style="position:absolute;left:122.50px;top:261.80px;width:77.50px;height:8.60px;background:linear-gradient(#e4ebf6,#d8e2f2)"></div><div style="position:absolute;left:122.50px;top:270.30px;width:77.50px;height:0.60px;background:#f8faff"></div><svg style="position:absolute;left:124.50px;top:264.40px" width="3" height="3.2" viewBox="0 0 3 3.2"><path d="M0.2 0.2L2.6 1.6L0.2 3Z" fill="#444"/></svg><div style="position:absolute;left:131.00px;top:262.76px;font-size:6.4px;line-height:1.2;color:#333;white-space:nowrap;-webkit-text-stroke:0.04px #333;">Constraints</div><div style="position:absolute;left:122.50px;top:270.60px;width:77.50px;height:8.60px;background:linear-gradient(#e4ebf6,#d8e2f2)"></div><div style="position:absolute;left:122.50px;top:279.10px;width:77.50px;height:0.60px;background:#f8faff"></div><svg style="position:absolute;left:124.50px;top:273.20px" width="3" height="3.2" viewBox="0 0 3 3.2"><path d="M0.2 0.2L2.6 1.6L0.2 3Z" fill="#444"/></svg><div style="position:absolute;left:131.00px;top:271.56px;font-size:6.4px;line-height:1.2;color:#333;white-space:nowrap;-webkit-text-stroke:0.04px #333;">Indexes</div><div style="position:absolute;left:269.30px;top:187.50px;width:82.20px;height:13.00px;background:linear-gradient(rgba(255,255,255,0.85),#fff)"></div><svg style="position:absolute;left:271.20px;top:190.40px" width="7.2" height="7.2" viewBox="0 0 7.2 7.2"><rect x="0.3" y="0.3" width="6.6" height="6.6" fill="#5a5a5a"/><path d="M0.3 2.3H6.9M0.3 3.9H6.9M0.3 5.4H6.9" stroke="#eee" stroke-width="0.5"/><path d="M2.3 2.3V6.9" stroke="#eee" stroke-width="0.5"/></svg><div style="position:absolute;left:279.90px;top:190.52px;font-size:6.8px;line-height:1.2;color:#111;white-space:nowrap;-webkit-text-stroke:0.04px #111;font-weight:bold;letter-spacing:-0.1px;-webkit-text-stroke:0.3px #111">dbo.address</div><svg style="position:absolute;left:343.50px;top:192.50px" width="4" height="3" viewBox="0 0 4 3"><path d="M0.3 2.6L2 0.6L3.7 2.6" fill="none" stroke="#666" stroke-width="0.8"/></svg><div style="position:absolute;left:270.20px;top:201.10px;width:82.80px;height:99.50px;border-radius:3px;background:rgba(0,0,0,0.24);filter:blur(0.7px)"></div><div style="position:absolute;left:268.90px;top:199.50px;width:82.80px;height:99.50px;box-sizing:border-box;border:1px solid #b4c0d4;border-radius:3px;background:linear-gradient(#e2eaf8,#eef3fb 50%,#f3f6fc)"></div><div style="position:absolute;left:269.90px;top:200.50px;width:80.80px;height:11.50px;background:linear-gradient(#dfe8f7,#e8eef9);border-radius:2px 2px 0 0"></div><div style="position:absolute;left:270.90px;top:212.00px;width:78.80px;height:0.80px;background:#b8c2d4"></div><svg style="position:absolute;left:270.70px;top:205.20px" width="8" height="4" viewBox="0 0 8 4"><path d="M0.3 2H5.5" stroke="#333" stroke-width="1.1"/><path d="M4.5 0.4L7.3 2L4.5 3.6Z" fill="#333"/></svg><div style="position:absolute;left:279.90px;top:203.96px;font-size:6.4px;line-height:1.2;color:#2e2e2e;white-space:nowrap;-webkit-text-stroke:0.04px #2e2e2e;">address_id</div><div style="position:absolute;left:316.90px;top:203.96px;font-size:6.4px;line-height:1.2;color:#2e2e2e;white-space:nowrap;-webkit-text-stroke:0.04px #2e2e2e;">int</div><div style="position:absolute;left:279.90px;top:214.46px;font-size:6.4px;line-height:1.2;color:#2e2e2e;white-space:nowrap;-webkit-text-stroke:0.04px #2e2e2e;">address</div><div style="position:absolute;left:316.90px;top:214.46px;font-size:6.4px;line-height:1.2;color:#2e2e2e;white-space:nowrap;-webkit-text-stroke:0.04px #2e2e2e;">varchar</div><div style="position:absolute;left:279.90px;top:223.36px;font-size:6.4px;line-height:1.2;color:#9a9a9a;white-space:nowrap;-webkit-text-stroke:0.04px #9a9a9a;font-style:italic">Address2</div><div style="position:absolute;left:316.90px;top:223.36px;font-size:6.4px;line-height:1.2;color:#9a9a9a;white-space:nowrap;-webkit-text-stroke:0.04px #9a9a9a;font-style:italic">varchar</div><div style="position:absolute;left:279.90px;top:231.76px;font-size:6.4px;line-height:1.2;color:#2e2e2e;white-space:nowrap;-webkit-text-stroke:0.04px #2e2e2e;">district</div><div style="position:absolute;left:316.90px;top:231.76px;font-size:6.4px;line-height:1.2;color:#2e2e2e;white-space:nowrap;-webkit-text-stroke:0.04px #2e2e2e;">varchar</div><svg style="position:absolute;left:270.70px;top:242.20px" width="8" height="4" viewBox="0 0 8 4"><path d="M2.5 2H7.5" stroke="#555" stroke-width="0.9"/><path d="M3.2 0.5L0.6 2L3.2 3.5" fill="none" stroke="#555" stroke-width="0.8"/></svg><div style="position:absolute;left:279.90px;top:240.96px;font-size:6.4px;line-height:1.2;color:#2e2e2e;white-space:nowrap;-webkit-text-stroke:0.04px #2e2e2e;">city_id</div><div style="position:absolute;left:316.90px;top:240.96px;font-size:6.4px;line-height:1.2;color:#2e2e2e;white-space:nowrap;-webkit-text-stroke:0.04px #2e2e2e;">int</div><div style="position:absolute;left:279.90px;top:249.26px;font-size:6.4px;line-height:1.2;color:#9a9a9a;white-space:nowrap;-webkit-text-stroke:0.04px #9a9a9a;font-style:italic">postal_code</div><div style="position:absolute;left:316.90px;top:249.26px;font-size:6.4px;line-height:1.2;color:#9a9a9a;white-space:nowrap;-webkit-text-stroke:0.04px #9a9a9a;font-style:italic">varchar</div><div style="position:absolute;left:279.90px;top:258.26px;font-size:6.4px;line-height:1.2;color:#2e2e2e;white-space:nowrap;-webkit-text-stroke:0.04px #2e2e2e;">phone</div><div style="position:absolute;left:316.90px;top:258.26px;font-size:6.4px;line-height:1.2;color:#2e2e2e;white-space:nowrap;-webkit-text-stroke:0.04px #2e2e2e;">varchar</div><div style="position:absolute;left:279.90px;top:266.56px;font-size:6.4px;line-height:1.2;color:#2e2e2e;white-space:nowrap;-webkit-text-stroke:0.04px #2e2e2e;">last_update</div><div style="position:absolute;left:316.90px;top:266.56px;font-size:6.4px;line-height:1.2;color:#2e2e2e;white-space:nowrap;-webkit-text-stroke:0.04px #2e2e2e;">datetime</div><div style="position:absolute;left:279.90px;top:274.76px;font-size:6.4px;line-height:1.2;color:#9a9a9a;white-space:nowrap;-webkit-text-stroke:0.04px #9a9a9a;font-style:italic">City</div><div style="position:absolute;left:316.90px;top:274.76px;font-size:6.4px;line-height:1.2;color:#9a9a9a;white-space:nowrap;-webkit-text-stroke:0.04px #9a9a9a;font-style:italic">varchar</div><svg style="position:absolute;left:0;top:0" width="391.3" height="282.5"><line x1="107.50" y1="102.50" x2="107.50" y2="112.00" stroke="#555" stroke-width="1.1"/><line x1="105.00" y1="102.50" x2="107.50" y2="106.50" stroke="#555" stroke-width="1.1"/><line x1="110.00" y1="102.50" x2="107.50" y2="106.50" stroke="#555" stroke-width="1.1"/><circle cx="107.5" cy="111.19999999999999" r="1.5" fill="#fff" stroke="#555" stroke-width="0.8"/><line x1="107.50" y1="113.50" x2="143.80" y2="113.50" stroke="#555" stroke-width="1.1"/><line x1="143.80" y1="113.50" x2="143.80" y2="208.00" stroke="#555" stroke-width="1.1"/><line x1="141.00" y1="201.00" x2="146.50" y2="201.00" stroke="#555" stroke-width="0.9"/><line x1="141.00" y1="203.30" x2="146.50" y2="203.30" stroke="#555" stroke-width="0.9"/><line x1="89.30" y1="195.30" x2="105.00" y2="195.30" stroke="#555" stroke-width="1.1"/><line x1="94.00" y1="192.80" x2="94.00" y2="197.80" stroke="#555" stroke-width="0.9"/><line x1="96.30" y1="192.80" x2="96.30" y2="197.80" stroke="#555" stroke-width="0.9"/><line x1="105.00" y1="195.30" x2="105.00" y2="201.00" stroke="#555" stroke-width="1.1"/><line x1="105.00" y1="201.00" x2="211.50" y2="201.00" stroke="#555" stroke-width="1.1"/><line x1="258.50" y1="199.50" x2="268.50" y2="199.50" stroke="#555" stroke-width="1.1"/><line x1="263.50" y1="197.00" x2="268.50" y2="199.50" stroke="#555" stroke-width="0.9"/><line x1="263.50" y1="202.00" x2="268.50" y2="199.50" stroke="#555" stroke-width="0.9"/><circle cx="262.0" cy="199.5" r="1.4" fill="#fff" stroke="#555" stroke-width="0.8"/><line x1="318.10" y1="142.80" x2="318.10" y2="150.00" stroke="#555" stroke-width="1.1"/><line x1="315.50" y1="143.00" x2="318.10" y2="147.00" stroke="#555" stroke-width="1.1"/><line x1="320.70" y1="143.00" x2="318.10" y2="147.00" stroke="#555" stroke-width="1.1"/><circle cx="317.29999999999995" cy="151.2" r="1.5" fill="#fff" stroke="#555" stroke-width="0.8"/><line x1="316.10" y1="152.60" x2="312.50" y2="155.50" stroke="#555" stroke-width="1.1"/><line x1="312.50" y1="155.50" x2="312.50" y2="188.00" stroke="#555" stroke-width="1.1"/><line x1="310.00" y1="180.50" x2="315.00" y2="180.50" stroke="#555" stroke-width="0.9"/><line x1="310.00" y1="182.80" x2="315.00" y2="182.80" stroke="#555" stroke-width="0.9"/></svg><div style="position:absolute;left:108.50px;top:116.30px;font-size:6.5px;line-height:1.2;color:#333;white-space:nowrap;-webkit-text-stroke:0.04px #333;background:#fff">fk_film_actor_actor</div><div style="position:absolute;left:212.50px;top:201.20px;font-size:6.5px;line-height:1.2;color:#333;white-space:nowrap;-webkit-text-stroke:0.04px #333;">fk_address_city</div><div style="position:absolute;left:318.50px;top:156.50px;font-size:6.5px;line-height:1.2;color:#333;white-space:nowrap;-webkit-text-stroke:0.04px #333;">fk_customer_address</div></div><div style="position:absolute;left:230px;top:433.8px;width:374px;height:36.5px;box-sizing:border-box;border-radius:7px;background:linear-gradient(90deg,rgba(196,176,238,0.78),rgba(222,186,246,0.8));border:1px solid rgba(235,215,255,0.6)"></div><svg style="position:absolute;left:236.20px;top:439.40px" width="23.6" height="23.6" viewBox="0 0 100 100"><rect x="3" y="3" width="94" height="94" rx="22" fill="#f8f8fa"/><ellipse cx="50" cy="33" rx="12" ry="17" fill="#f4c030" opacity="0.9" transform="rotate(20 50 50)"/><ellipse cx="50" cy="33" rx="12" ry="17" fill="#f0a030" opacity="0.9" transform="rotate(70 50 50)"/><ellipse cx="50" cy="33" rx="12" ry="17" fill="#58a8e8" opacity="0.9" transform="rotate(120 50 50)"/><ellipse cx="50" cy="33" rx="12" ry="17" fill="#4a80e0" opacity="0.9" transform="rotate(170 50 50)"/><ellipse cx="50" cy="33" rx="12" ry="17" fill="#a078d8" opacity="0.9" transform="rotate(220 50 50)"/><ellipse cx="50" cy="33" rx="12" ry="17" fill="#e890b0" opacity="0.9" transform="rotate(260 50 50)"/><ellipse cx="50" cy="33" rx="12" ry="17" fill="#e84848" opacity="0.9" transform="rotate(310 50 50)"/></svg><svg style="position:absolute;left:272.70px;top:439.40px" width="23.6" height="23.6" viewBox="0 0 100 100"><rect x="3" y="3" width="94" height="94" rx="22" fill="#f2f4f8"/><circle cx="50" cy="50" r="42" fill="#1a78e0"/><circle cx="50" cy="50" r="37" fill="#3a9af4"/><path d="M74 26L54 54L26 74L46 46Z" fill="#f4f4f4"/><path d="M74 26L54 54L46 46Z" fill="#e84848"/></svg><svg style="position:absolute;left:312.00px;top:439.40px" width="23.6" height="23.6" viewBox="0 0 100 100"><defs><clipPath id="cn"><rect x="3" y="3" width="94" height="94" rx="22"/></clipPath></defs><g clip-path="url(#cn)"><rect x="3" y="3" width="94" height="94" fill="#fafafa"/><rect x="3" y="3" width="94" height="32" fill="#f0c630"/><path d="M3 55H97M3 75H97" stroke="#d0d0d0" stroke-width="3"/></g></svg><svg style="position:absolute;left:349.20px;top:439.40px" width="23.6" height="23.6" viewBox="0 0 100 100"><defs><clipPath id="cc"><rect x="3" y="3" width="94" height="94" rx="22"/></clipPath></defs><g clip-path="url(#cc)"><rect x="3" y="3" width="94" height="94" fill="#fafafa"/><rect x="3" y="3" width="94" height="26" fill="#ee4848"/></g><text x="50" y="88" font-size="60" font-weight="bold" text-anchor="middle" font-family="Liberation Sans" fill="#1a1a1a">8</text></svg><svg style="position:absolute;left:387.00px;top:439.40px" width="23.6" height="23.6" viewBox="0 0 100 100"><rect x="3" y="3" width="94" height="94" rx="22" fill="#1e8cf0"/><path d="M50 18L30 78M50 18L70 78M24 62H76" stroke="#fff" stroke-width="8" stroke-linecap="round"/></svg><svg style="position:absolute;left:425.20px;top:439.40px" width="23.6" height="23.6" viewBox="0 0 100 100"><rect x="3" y="3" width="94" height="94" rx="22" fill="#d8d8d8"/><rect x="9" y="9" width="82" height="82" rx="14" fill="#2a2a2e"/><rect x="9" y="9" width="82" height="14" fill="#4a4a50"/><path d="M22 40L32 48L22 56" stroke="#eee" stroke-width="5" fill="none"/></svg><svg style="position:absolute;left:461.20px;top:439.40px" width="23.6" height="23.6" viewBox="0 0 100 100"><defs><clipPath id="cf"><rect x="3" y="3" width="94" height="94" rx="22"/></clipPath></defs><g clip-path="url(#cf)"><rect x="3" y="3" width="94" height="94" fill="#e8eef6"/><path d="M3 3H58C48 30 46 55 52 97H3Z" fill="#2a96f0"/><circle cx="32" cy="40" r="4" fill="#222"/><circle cx="70" cy="40" r="4" fill="#222"/><path d="M25 68Q50 82 78 68" stroke="#222" stroke-width="4" fill="none"/></g></svg><svg style="position:absolute;left:497.00px;top:439.40px" width="23.6" height="23.6" viewBox="0 0 100 100"><rect x="3" y="3" width="94" height="94" rx="22" fill="#b4b4b8"/><circle cx="50" cy="50" r="40" fill="#d0d0d4"/><rect x="46" y="12" width="8" height="14" fill="#3a3a3e" transform="rotate(0 50 50)"/><rect x="46" y="12" width="8" height="14" fill="#3a3a3e" transform="rotate(30 50 50)"/><rect x="46" y="12" width="8" height="14" fill="#3a3a3e" transform="rotate(60 50 50)"/><rect x="46" y="12" width="8" height="14" fill="#3a3a3e" transform="rotate(90 50 50)"/><rect x="46" y="12" width="8" height="14" fill="#3a3a3e" transform="rotate(120 50 50)"/><rect x="46" y="12" width="8" height="14" fill="#3a3a3e" transform="rotate(150 50 50)"/><rect x="46" y="12" width="8" height="14" fill="#3a3a3e" transform="rotate(180 50 50)"/><rect x="46" y="12" width="8" height="14" fill="#3a3a3e" transform="rotate(210 50 50)"/><rect x="46" y="12" width="8" height="14" fill="#3a3a3e" transform="rotate(240 50 50)"/><rect x="46" y="12" width="8" height="14" fill="#3a3a3e" transform="rotate(270 50 50)"/><rect x="46" y="12" width="8" height="14" fill="#3a3a3e" transform="rotate(300 50 50)"/><rect x="46" y="12" width="8" height="14" fill="#3a3a3e" transform="rotate(330 50 50)"/><circle cx="50" cy="50" r="30" fill="#3a3a3e"/><circle cx="50" cy="50" r="22" fill="#a0a0a4"/><circle cx="50" cy="50" r="9" fill="#3a3a3e"/></svg><svg style="position:absolute;left:530.30px;top:440.20px" width="22" height="22" viewBox="0 0 100 100"><path d="M50 4L92 27V73L50 96L8 73V27Z" fill="#7a2ad0"/><path d="M50 14L82 32V68L50 86L18 68V32Z" fill="#5a18a8"/><path d="M66 36H40Q32 36 32 44Q32 52 40 52H60Q68 52 68 60Q68 68 60 68H34" stroke="#f0e8ff" stroke-width="9" fill="none"/></svg><div style="position:absolute;left:562.6px;top:440px;width:0.8px;height:22px;background:rgba(240,230,255,0.6)"></div><svg style="position:absolute;left:572.30px;top:439.70px" width="23" height="23" viewBox="0 0 100 100"><path d="M16 20H84L77 93Q76 97 71 97H29Q24 97 23 93Z" fill="#e8e8ee" opacity="0.92"/><ellipse cx="50" cy="20" rx="34" ry="7" fill="#f6f6fa"/><path d="M36 32L38 88M50 32V88M64 32L62 88" stroke="#d0d0d8" stroke-width="2"/></svg><div style="position:absolute;left:283.3px;top:465.3px;width:2.2px;height:2.2px;border-radius:50%;background:rgba(255,255,255,0.8)"></div><div style="position:absolute;left:540.2px;top:465.3px;width:2.2px;height:2.2px;border-radius:50%;background:rgba(255,255,255,0.8)"></div></div>
</body></html>
